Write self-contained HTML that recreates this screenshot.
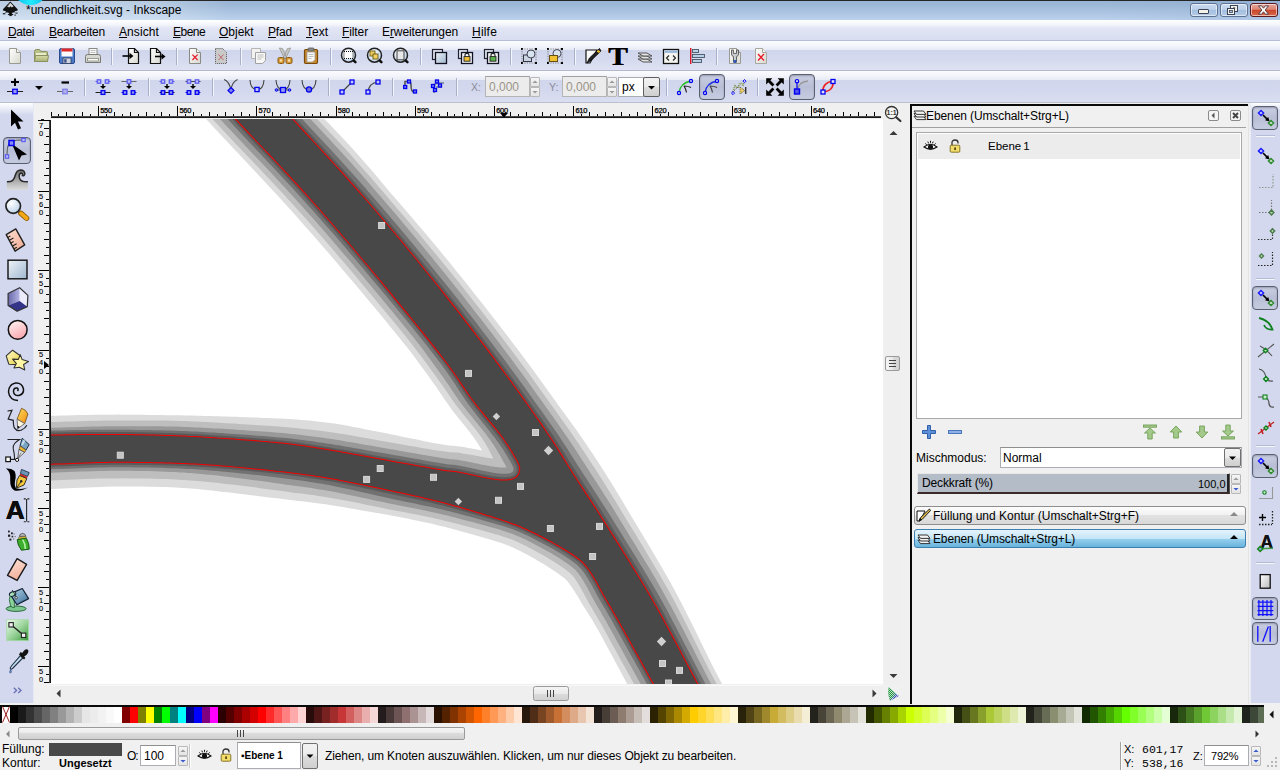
<!DOCTYPE html><html><head><meta charset="utf-8"><title>unendlichkeit.svg - Inkscape</title><style>
*{box-sizing:border-box;margin:0;padding:0}
html,body{width:1280px;height:770px;overflow:hidden;background:#f0f0f0}
body{font-family:"Liberation Sans",sans-serif;font-size:12px;color:#000;position:relative}
.a{position:absolute}
.t{position:absolute;white-space:nowrap;line-height:1}
svg{position:absolute;overflow:visible}
.sep{position:absolute;width:1px;background:#a9b0cc;box-shadow:1px 0 0 #f4f6fc}
.hsep{position:absolute;height:1px;background:#f4f6fc;box-shadow:0 -1px 0 #b4bbd4}
.pressed{position:absolute;border:1px solid #5b6070;border-radius:4px;background:linear-gradient(#c9cee2,#b9bfd6 50%,#c6cce0);box-shadow:inset 0 1px 2px rgba(60,60,90,.35)}
.spin{position:absolute;background:#fff;border:1px solid #abadb3;border-top-color:#8e8f8f}
.u{text-decoration:underline}
</style></head><body><div class="a" style="left:0;top:0;width:1280px;height:20px;background:linear-gradient(#98b4d4 0px,#9db8d7 5px,#a9c2df 11px,#b9d0eb 19px,#bcd3ee 20px)"></div><div class="a" style="left:0;top:1px;width:230px;height:19px;background:linear-gradient(90deg,rgba(255,255,255,.34) 0px,rgba(255,255,255,.30) 150px,rgba(255,255,255,0) 230px)"></div><div class="a" style="left:1100px;top:1px;width:180px;height:19px;background:linear-gradient(90deg,rgba(120,150,200,0),rgba(120,150,200,.18))"></div><div class="a" style="left:0;top:0;width:1280px;height:1px;background:#262626"></div><div class="a" style="left:13px;top:-30.5px;width:35px;height:35px;border-radius:50%;background:radial-gradient(circle at 50% 92%,#22ecff,#14c8ee 30%,#1498cc 60%)"></div><svg style="left:2px;top:1px" width="17" height="17" viewBox="0 0 17 17">
<path d="M8.3 0.6 L15.6 8.2 Q16.3 9.3 15 9.8 L12.5 10.2 L13.5 11.2 L10.8 11.6 L9.6 12.6 L11.6 13.4 L8.6 15.2 L5.6 13.6 L7.4 12.6 L6 11.6 L2.8 11.4 L4.2 10.3 L1.6 9.8 Q0.2 9.2 1.2 8.1 Z" fill="#111"/>
<path d="M8.3 1.8 L11.6 5.2 L9.8 6.4 L8.6 5.2 L7.2 6.6 L5.2 5.4 Z" fill="#d8d8d8"/>
<path d="M8.3 1.8 L5.2 5.4 L4 6.6 L6 5.6Z" fill="#888"/>
<rect x="0.8" y="12.2" width="2.6" height="1.1" fill="#111"/><rect x="13.4" y="11.6" width="2.2" height="1" fill="#111"/><rect x="12.4" y="13.6" width="1.4" height="1" fill="#111"/>
</svg><div class="t" style="left:26px;top:4px;font-size:12px;color:#000">*unendlichkeit.svg - Inkscape</div><div class="a" style="left:1190px;top:3px;width:28px;height:14px;border:1px solid #5e7391;border-radius:3px;background:linear-gradient(#c9daef 0%,#bdd1ea 45%,#a3bfe0 50%,#b4cbe6 100%);box-shadow:inset 0 0 0 1px rgba(255,255,255,.55)"></div><div class="a" style="left:1220px;top:3px;width:28px;height:14px;border:1px solid #5e7391;border-radius:3px;background:linear-gradient(#c9daef 0%,#bdd1ea 45%,#a3bfe0 50%,#b4cbe6 100%);box-shadow:inset 0 0 0 1px rgba(255,255,255,.55)"></div><div class="a" style="left:1250px;top:3px;width:28px;height:14px;border:1px solid #5a1a20;border-radius:3px;background:linear-gradient(#e7a89c 0%,#dc8573 45%,#c9452a 50%,#d9694b 100%);box-shadow:inset 0 0 0 1px rgba(255,255,255,.55)"></div><div class="a" style="left:1198px;top:9px;width:11px;height:5px;background:#f3f3ea;border:1px solid #3c4458;border-radius:1px"></div><svg style="left:1226px;top:4px" width="14" height="12" viewBox="0 0 14 12"><rect x="4.5" y="1.5" width="7" height="6" fill="#f3f3ea" stroke="#3c4458"/><rect x="1.5" y="4.5" width="7" height="6" fill="#f3f3ea" stroke="#3c4458"/><rect x="3.5" y="6.5" width="3" height="2" fill="#a9c0de" stroke="#3c4458" stroke-width=".8"/><rect x="7" y="3.4" width="2.2" height="1.2" fill="#3c4458"/></svg><svg style="left:1257px;top:5px" width="13" height="10" viewBox="0 0 13 10"><path d="M1.5 0.8 L4.6 0.8 L6.5 3.2 L8.4 0.8 L11.5 0.8 L8.2 5 L11.5 9.2 L8.4 9.2 L6.5 6.8 L4.6 9.2 L1.5 9.2 L4.8 5Z" fill="#fafafa" stroke="#4a3038" stroke-width=".9"/></svg><div class="a" style="left:0;top:20px;width:1280px;height:21px;background:linear-gradient(#ffffff 0%,#f3f5fb 22%,#e1e5f4 40%,#d8ddf0 100%)"></div><div class="a" style="left:0;top:40px;width:1280px;height:1px;background:#b6bdd8"></div><div class="t" style="left:8px;top:26px;font-size:12px;letter-spacing:-0.4px"><span class="u">D</span>atei</div><div class="t" style="left:49px;top:26px;font-size:12px;letter-spacing:-0.2px"><span class="u">B</span>earbeiten</div><div class="t" style="left:119px;top:26px;font-size:12px;letter-spacing:0.08px"><span class="u">A</span>nsicht</div><div class="t" style="left:173px;top:26px;font-size:12px;letter-spacing:-0.5px"><span class="u">E</span>bene</div><div class="t" style="left:219px;top:26px;font-size:12px;letter-spacing:0px"><span class="u">O</span>bjekt</div><div class="t" style="left:268px;top:26px;font-size:12px;letter-spacing:-0.15px"><span class="u">P</span>fad</div><div class="t" style="left:306px;top:26px;font-size:12px;letter-spacing:0px"><span class="u">T</span>ext</div><div class="t" style="left:342px;top:26px;font-size:12px;letter-spacing:-0.1px"><span class="u">F</span>ilter</div><div class="t" style="left:382px;top:26px;font-size:12px;letter-spacing:-0.1px">E<span class="u">r</span>weiterungen</div><div class="t" style="left:472px;top:26px;font-size:12px;letter-spacing:0.2px"><span class="u">H</span>ilfe</div><div class="a" style="left:0;top:41px;width:1280px;height:30px;background:linear-gradient(#fbfcfe 0px,#f5f6fb 4px,#e7eaf5 9px,#d0d6ec 9.5px,#d4d9ee 18px,#dee2f3 29px)"></div><div class="a" style="left:0;top:70px;width:1280px;height:1px;background:#b3b8cd"></div><div class="a" style="left:0;top:71px;width:1280px;height:31px;background:linear-gradient(#fbfcfe 0px,#f5f6fb 4px,#e7eaf5 9px,#d0d6ec 9.5px,#d3d8ee 20px,#dadef1 31px)"></div><div class="a" style="left:0;top:102px;width:1280px;height:1px;background:#babece"></div><div class="a" style="left:0;top:103px;width:33px;height:600px;background:linear-gradient(#ffffff 0px,#e9ecf7 6px,#d3d8ee 12px,#d3d8ee 100%)"></div><div class="a" style="left:33px;top:103px;width:1px;height:600px;background:#e6e9f5"></div><svg style="left:51px;top:119px" width="832" height="565" viewBox="51 119 832 565"><defs><clipPath id="cc"><rect x="51" y="119" width="832" height="565"/></clipPath></defs><g clip-path="url(#cc)"><rect x="51" y="119" width="832" height="565" fill="#fff"/><path d="M183.2 94.7 L185.2 96.8 L187.6 99.3 L190.3 102.2 L193.3 105.5 L196.8 109.2 L200.6 113.3 L204.8 117.7 L209.4 122.6 L214.3 128.0 L219.7 133.7 L225.7 140.1 L232.3 147.2 L239.5 154.8 L247.1 162.9 L255.0 171.3 L263.0 179.9 L271.0 188.5 L278.9 197.1 L286.6 205.5 L293.9 213.6 L300.9 221.5 L307.9 229.4 L314.9 237.3 L321.7 245.2 L328.6 253.1 L335.4 261.0 L342.1 268.9 L348.8 276.9 L355.5 284.8 L362.2 292.8 L369.0 300.9 L376.0 309.3 L383.1 317.8 L390.1 326.4 L397.1 334.9 L403.8 343.2 L410.2 351.3 L416.0 359.0 L421.2 366.2 L425.9 372.6 L429.8 378.1 L433.3 382.9 L436.3 387.1 L438.9 390.9 L441.3 394.5 L443.6 397.9 L445.9 401.3 L448.4 404.8 L451.0 408.5 L453.8 412.3 L456.8 416.0 L459.7 419.7 L462.7 423.3 L465.5 426.8 L468.2 430.2 L470.7 433.5 L473.1 436.6 L475.1 439.4 L476.9 442.0 L478.4 444.4 L479.7 446.4 L480.8 448.2 L481.7 449.7 L482.4 451.0 L483.0 452.1 L483.5 453.0 L484.0 454.0 L484.5 455.0 L485.1 456.1 L485.7 457.4 L486.4 458.7 L487.0 460.0 L487.6 461.3 L488.3 462.7 L488.9 464.0 L489.6 465.3 L490.2 466.6 L490.8 467.9 L491.4 469.0 L492.0 470.1 L492.5 471.1 L492.9 472.0 L493.3 472.7 L493.6 473.4 L493.8 473.8 L493.9 474.2 L494.0 474.4 L494.0 474.4 L493.9 474.3 L493.8 474.1 L493.7 473.7 L493.5 473.2 L493.3 472.3 L493.1 471.3 L493.0 470.1 L493.0 469.0 L493.0 467.9 L493.0 467.1 L493.1 466.6 L493.1 466.3 L493.2 465.8 L493.3 465.3 L493.4 464.8 L493.6 464.2 L493.8 463.6 L494.1 462.9 L494.5 462.1 L495.0 461.1 L495.7 460.0 L496.7 458.8 L497.7 457.6 L498.6 456.7 L499.5 456.0 L500.2 455.4 L500.9 455.0 L501.5 454.6 L502.0 454.3 L502.4 454.1 L502.8 454.0 L503.2 453.8 L503.7 453.6 L504.3 453.5 L504.8 453.3 L505.2 453.2 L505.5 453.2 L505.6 453.2 L505.6 453.2 L505.5 453.2 L505.2 453.2 L504.9 453.3 L504.5 453.3 L504.2 453.3 L503.9 453.3 L503.6 453.4 L503.2 453.4 L502.9 453.4 L502.5 453.4 L502.0 453.3 L501.5 453.3 L500.9 453.3 L500.1 453.2 L499.3 453.1 L498.4 453.0 L497.4 452.9 L496.3 452.8 L495.2 452.7 L494.1 452.5 L492.9 452.3 L491.7 452.2 L490.5 452.0 L489.4 451.8 L488.3 451.6 L487.0 451.4 L485.7 451.2 L484.3 450.9 L482.8 450.6 L481.3 450.3 L479.7 450.0 L478.1 449.7 L476.5 449.4 L475.0 449.1 L473.5 448.9 L471.9 448.6 L470.3 448.3 L468.6 448.0 L466.9 447.7 L465.2 447.3 L463.4 447.0 L461.5 446.7 L459.6 446.4 L457.5 446.2 L455.6 446.0 L453.9 445.8 L452.8 445.8 L452.3 445.8 L451.8 445.8 L450.9 445.7 L449.4 445.5 L447.2 445.2 L444.2 444.8 L440.1 444.1 L435.1 443.2 L429.5 442.2 L423.3 441.0 L416.9 439.6 L410.2 438.3 L403.5 436.9 L397.0 435.6 L390.7 434.3 L385.0 433.1 L379.5 432.1 L374.2 431.0 L369.0 429.9 L363.8 428.9 L358.7 427.8 L353.7 426.9 L348.8 425.9 L343.9 425.0 L339.1 424.3 L334.4 423.5 L329.9 422.9 L325.6 422.4 L321.4 421.9 L317.3 421.4 L313.3 421.0 L309.3 420.6 L305.3 420.3 L301.2 419.9 L297.1 419.6 L293.0 419.3 L288.8 419.0 L284.6 418.8 L280.4 418.6 L276.2 418.4 L272.1 418.2 L268.0 418.1 L263.9 417.9 L259.9 417.8 L255.9 417.6 L251.8 417.5 L247.8 417.3 L243.7 417.2 L239.6 417.0 L235.6 416.8 L231.5 416.7 L227.4 416.6 L223.4 416.4 L219.3 416.3 L215.3 416.2 L211.3 416.1 L207.4 416.0 L203.7 415.9 L200.1 415.7 L196.5 415.7 L192.8 415.6 L189.1 415.5 L185.1 415.4 L180.9 415.3 L176.5 415.3 L171.6 415.2 L166.5 415.2 L160.9 415.1 L155.1 415.0 L149.0 414.9 L142.7 414.8 L136.4 414.8 L130.0 414.7 L123.6 414.7 L117.3 414.6 L111.1 414.7 L104.9 414.7 L98.6 414.8 L92.2 414.8 L85.9 415.0 L79.5 415.1 L73.3 415.2 L67.3 415.4 L61.4 415.5 L55.9 415.7 L50.6 415.8 L45.5 415.9 L40.5 416.0 L35.5 416.1 L30.7 416.3 L26.2 416.4 L22.0 416.5 L18.1 416.6 L14.7 416.7 L11.8 416.7 L-9.5 434.6 L-14.4 467.6 L13.1 490.1 L16.0 490.0 L19.5 490.0 L23.3 489.9 L27.5 489.8 L32.0 489.6 L36.8 489.5 L41.7 489.3 L46.7 489.1 L51.8 489.0 L57.1 488.8 L62.8 488.5 L68.6 488.2 L74.6 488.0 L80.8 487.7 L87.0 487.4 L93.2 487.2 L99.3 486.9 L105.4 486.8 L111.3 486.6 L117.2 486.6 L123.3 486.5 L129.5 486.5 L135.7 486.6 L141.9 486.6 L148.0 486.7 L154.0 486.8 L159.8 487.0 L165.2 487.1 L170.3 487.3 L175.0 487.5 L179.3 487.8 L183.2 488.0 L186.9 488.3 L190.5 488.5 L194.0 488.8 L197.4 489.1 L200.9 489.4 L204.5 489.8 L208.3 490.2 L212.1 490.6 L215.9 491.0 L219.8 491.4 L223.7 491.9 L227.6 492.3 L231.6 492.8 L235.5 493.3 L239.5 493.8 L243.5 494.3 L247.4 494.8 L251.4 495.3 L255.4 495.8 L259.3 496.2 L263.3 496.7 L267.2 497.2 L271.1 497.7 L275.0 498.1 L278.9 498.6 L282.8 499.1 L286.7 499.6 L290.6 500.0 L294.5 500.5 L298.2 500.9 L302.0 501.3 L305.7 501.7 L309.5 502.2 L313.3 502.7 L317.2 503.2 L321.3 503.7 L325.5 504.3 L329.9 505.0 L334.5 505.7 L339.3 506.5 L344.3 507.3 L349.3 508.2 L354.4 509.1 L359.6 510.0 L364.8 510.9 L370.0 511.8 L375.2 512.7 L380.4 513.6 L385.8 514.6 L391.2 515.6 L396.6 516.6 L402.0 517.6 L407.3 518.6 L412.5 519.7 L417.5 520.7 L422.3 521.7 L426.8 522.7 L430.9 523.6 L434.8 524.5 L438.4 525.4 L441.9 526.2 L445.3 527.1 L448.6 527.9 L451.9 528.8 L455.4 529.7 L458.9 530.7 L462.7 531.7 L466.7 532.8 L470.8 534.0 L475.2 535.2 L479.6 536.5 L484.0 537.8 L488.3 539.0 L492.4 540.3 L496.2 541.5 L499.7 542.6 L502.8 543.6 L505.4 544.5 L507.5 545.3 L509.4 546.1 L510.9 546.7 L512.4 547.3 L513.7 548.0 L515.1 548.6 L516.6 549.4 L518.3 550.2 L520.2 551.1 L522.0 552.0 L523.8 552.9 L525.6 553.8 L527.4 554.8 L529.2 555.8 L531.0 556.8 L532.8 557.8 L534.6 558.8 L536.4 559.9 L538.2 560.9 L539.9 561.9 L541.7 563.0 L543.5 564.1 L545.2 565.1 L546.9 566.2 L548.6 567.2 L550.2 568.3 L551.7 569.3 L553.2 570.2 L554.6 571.2 L556.0 572.1 L557.3 573.0 L558.5 573.8 L559.6 574.7 L560.7 575.4 L561.7 576.2 L562.5 576.8 L563.4 577.5 L564.1 578.1 L564.7 578.6 L565.3 579.1 L565.8 579.6 L566.1 579.9 L566.4 580.2 L566.7 580.5 L566.9 580.8 L567.3 581.1 L567.7 581.6 L568.2 582.3 L568.8 583.0 L569.3 583.7 L569.8 584.4 L570.4 585.2 L571.0 586.0 L571.6 587.0 L572.4 588.1 L573.1 589.2 L573.9 590.4 L574.7 591.6 L575.4 592.8 L576.1 593.8 L576.7 594.8 L577.4 595.8 L578.0 596.9 L578.8 598.2 L579.6 599.5 L580.4 601.0 L581.4 602.7 L582.5 604.5 L583.7 606.5 L585.0 608.5 L586.2 610.3 L587.3 612.1 L588.5 614.0 L589.7 615.9 L591.0 618.1 L592.6 620.5 L594.3 623.4 L596.2 626.8 L598.5 630.8 L601.3 635.8 L604.5 641.7 L608.1 648.4 L612.0 655.6 L615.9 662.9 L619.9 670.3 L623.7 677.4 L627.3 684.0 L630.5 689.8 L633.1 694.6 L635.2 698.5 L637.0 701.8 L638.6 704.5 L639.8 706.8 L640.9 708.7 L641.8 710.3 L642.5 711.7 L643.2 712.9 L643.8 714.0 L663.9 726.9 L709.3 725.4 L727.0 692.6 L726.4 691.7 L725.9 690.8 L725.4 689.8 L724.6 688.5 L723.7 686.8 L722.5 684.6 L720.9 681.7 L718.9 678.0 L716.4 673.3 L713.4 667.5 L709.9 660.5 L706.0 652.6 L701.8 643.9 L697.2 634.6 L692.5 625.1 L687.7 615.4 L682.9 605.9 L678.1 596.7 L673.4 588.0 L668.8 579.6 L664.0 571.2 L659.1 562.8 L654.2 554.5 L649.4 546.3 L644.6 538.3 L639.9 530.6 L635.5 523.2 L631.3 516.3 L627.5 509.8 L623.9 503.7 L620.5 498.1 L617.4 492.9 L614.5 488.1 L611.7 483.6 L609.0 479.2 L606.3 475.0 L603.7 470.7 L600.9 466.5 L598.1 462.0 L595.2 457.7 L592.5 453.5 L589.7 449.4 L586.9 445.2 L584.0 441.0 L580.9 436.5 L577.7 431.8 L574.1 426.8 L570.3 421.5 L566.1 415.8 L561.7 409.7 L557.0 403.3 L552.2 396.5 L547.1 389.5 L541.9 382.2 L536.5 374.8 L531.0 367.3 L525.4 359.7 L519.7 352.0 L513.9 344.4 L508.1 336.7 L502.1 328.9 L495.9 321.0 L489.7 312.9 L483.3 304.8 L476.9 296.7 L470.4 288.5 L463.9 280.3 L457.3 272.2 L450.8 264.1 L444.2 256.1 L437.6 248.1 L430.9 240.1 L424.2 232.1 L417.4 224.1 L410.6 216.1 L403.7 208.1 L396.8 200.1 L389.8 192.0 L382.9 183.8 L375.8 175.3 L368.3 166.6 L360.6 157.7 L352.8 148.9 L344.8 140.3 L336.9 132.0 L329.3 124.1 L322.1 116.7 L315.6 109.8 L309.7 103.5 L304.4 97.8 L299.5 92.5 L295.0 87.6 L290.8 83.1 L287.1 79.0 L283.6 75.3 L280.6 72.1 L277.9 69.2 L275.6 66.7 L273.7 64.5Z" fill="#dcdcdc" fill-rule="nonzero"/><path d="M186.6 91.5 L188.6 93.6 L191.0 96.1 L193.7 99.0 L196.8 102.3 L200.2 106.0 L204.0 110.1 L208.2 114.5 L212.8 119.4 L217.8 124.7 L223.2 130.5 L229.1 136.8 L235.8 143.9 L243.1 151.5 L250.7 159.5 L258.7 167.8 L266.8 176.4 L274.9 185.0 L282.9 193.5 L290.6 201.9 L297.9 209.9 L305.0 217.8 L312.1 225.7 L319.0 233.7 L325.9 241.6 L332.8 249.5 L339.6 257.4 L346.4 265.3 L353.1 273.3 L359.8 281.2 L366.5 289.2 L373.3 297.3 L380.3 305.7 L387.4 314.2 L394.5 322.8 L401.5 331.3 L408.3 339.7 L414.6 347.7 L420.5 355.4 L425.8 362.6 L430.5 369.0 L434.6 374.6 L438.1 379.4 L441.2 383.7 L443.9 387.6 L446.3 391.1 L448.7 394.6 L451.0 398.0 L453.4 401.4 L455.9 404.9 L458.7 408.6 L461.6 412.3 L464.6 415.9 L467.5 419.5 L470.3 422.9 L473.0 426.3 L475.6 429.5 L477.9 432.5 L480.0 435.4 L481.8 438.1 L483.4 440.4 L484.7 442.5 L485.9 444.4 L486.8 445.9 L487.5 447.2 L488.2 448.3 L488.7 449.3 L489.2 450.3 L489.8 451.4 L490.4 452.6 L491.0 453.9 L491.7 455.2 L492.3 456.6 L493.0 457.9 L493.6 459.3 L494.3 460.7 L495.0 462.1 L495.6 463.5 L496.2 464.7 L496.8 465.9 L497.3 467.0 L497.8 468.1 L498.3 469.0 L498.7 469.8 L499.0 470.5 L499.2 471.0 L499.4 471.5 L499.5 471.8 L499.6 472.0 L499.6 472.1 L499.6 472.1 L499.5 472.0 L499.4 471.6 L499.3 471.1 L499.2 470.4 L499.1 469.7 L499.0 468.9 L499.0 468.2 L499.1 467.7 L499.1 467.4 L499.1 467.2 L499.1 467.0 L499.2 466.7 L499.3 466.4 L499.3 466.1 L499.5 465.8 L499.6 465.4 L499.9 464.9 L500.2 464.2 L500.7 463.5 L501.4 462.6 L502.1 461.8 L502.7 461.2 L503.2 460.7 L503.7 460.3 L504.2 460.1 L504.5 459.8 L504.8 459.7 L505.0 459.6 L505.1 459.5 L505.3 459.5 L505.6 459.3 L505.9 459.3 L506.2 459.2 L506.4 459.2 L506.4 459.1 L506.4 459.2 L506.3 459.2 L506.0 459.2 L505.7 459.2 L505.2 459.3 L504.8 459.3 L504.4 459.3 L504.0 459.4 L503.6 459.4 L503.1 459.4 L502.7 459.4 L502.2 459.4 L501.6 459.4 L501.0 459.3 L500.3 459.3 L499.5 459.2 L498.6 459.2 L497.6 459.1 L496.5 458.9 L495.4 458.8 L494.3 458.7 L493.1 458.5 L491.9 458.4 L490.6 458.2 L489.4 458.0 L488.2 457.9 L487.0 457.7 L485.7 457.4 L484.4 457.2 L482.9 457.0 L481.5 456.7 L480.0 456.4 L478.4 456.1 L476.8 455.9 L475.2 455.6 L473.7 455.3 L472.2 455.1 L470.6 454.8 L469.0 454.5 L467.4 454.2 L465.7 453.9 L463.9 453.7 L462.2 453.4 L460.4 453.1 L458.6 452.8 L456.7 452.6 L455.0 452.4 L453.5 452.3 L452.5 452.3 L451.8 452.3 L451.2 452.3 L450.1 452.2 L448.5 452.0 L446.2 451.7 L443.1 451.3 L438.9 450.7 L433.9 449.9 L428.3 449.0 L422.1 448.0 L415.6 446.8 L408.9 445.7 L402.2 444.5 L395.6 443.3 L389.3 442.2 L383.5 441.2 L378.1 440.2 L372.7 439.2 L367.4 438.3 L362.3 437.4 L357.1 436.4 L352.1 435.6 L347.2 434.7 L342.3 433.9 L337.6 433.2 L332.9 432.5 L328.5 431.9 L324.2 431.3 L320.0 430.7 L315.9 430.2 L311.9 429.8 L308.0 429.3 L304.0 428.9 L300.1 428.5 L296.1 428.1 L292.0 427.7 L287.8 427.3 L283.7 427.0 L279.6 426.6 L275.5 426.3 L271.4 426.0 L267.3 425.8 L263.3 425.5 L259.3 425.2 L255.3 425.0 L251.3 424.7 L247.2 424.4 L243.2 424.2 L239.1 423.9 L235.1 423.6 L231.0 423.4 L227.0 423.2 L222.9 422.9 L218.9 422.7 L214.9 422.5 L210.9 422.3 L207.1 422.1 L203.4 421.9 L199.8 421.7 L196.2 421.5 L192.5 421.4 L188.8 421.2 L184.9 421.1 L180.7 420.9 L176.3 420.8 L171.5 420.7 L166.3 420.6 L160.8 420.5 L154.9 420.5 L148.9 420.4 L142.6 420.4 L136.3 420.4 L129.9 420.4 L123.5 420.4 L117.2 420.4 L111.1 420.5 L104.9 420.5 L98.6 420.7 L92.3 420.8 L85.9 421.0 L79.6 421.2 L73.4 421.4 L67.4 421.5 L61.5 421.7 L56.0 421.9 L50.8 422.0 L45.7 422.2 L40.6 422.3 L35.7 422.4 L30.9 422.6 L26.4 422.7 L22.1 422.8 L18.3 422.9 L14.9 423.0 L12.0 423.0 L-3.1 435.2 L-6.0 466.9 L12.9 481.6 L15.8 481.6 L19.2 481.5 L23.0 481.4 L27.3 481.3 L31.8 481.1 L36.5 481.0 L41.4 480.8 L46.5 480.7 L51.5 480.5 L56.8 480.3 L62.4 480.1 L68.3 479.8 L74.3 479.6 L80.4 479.3 L86.7 479.1 L92.9 478.8 L99.1 478.6 L105.2 478.5 L111.2 478.4 L117.1 478.4 L123.3 478.3 L129.5 478.4 L135.8 478.4 L142.1 478.5 L148.2 478.6 L154.2 478.7 L160.0 478.9 L165.4 479.1 L170.5 479.3 L175.2 479.5 L179.5 479.7 L183.5 480.0 L187.3 480.2 L190.9 480.5 L194.4 480.7 L197.9 481.0 L201.4 481.3 L205.0 481.7 L208.8 482.0 L212.7 482.4 L216.6 482.8 L220.5 483.3 L224.4 483.7 L228.4 484.2 L232.3 484.6 L236.3 485.1 L240.3 485.6 L244.3 486.1 L248.2 486.6 L252.2 487.1 L256.2 487.6 L260.1 488.2 L264.1 488.7 L268.0 489.2 L272.0 489.7 L275.9 490.2 L279.8 490.8 L283.7 491.3 L287.6 491.8 L291.6 492.4 L295.4 492.9 L299.2 493.3 L303.0 493.8 L306.7 494.3 L310.5 494.8 L314.4 495.3 L318.3 495.9 L322.4 496.5 L326.7 497.2 L331.2 498.0 L335.8 498.8 L340.7 499.7 L345.6 500.6 L350.7 501.6 L355.8 502.6 L360.9 503.6 L366.1 504.7 L371.3 505.7 L376.5 506.8 L381.7 507.8 L387.0 508.9 L392.4 509.9 L397.8 511.0 L403.2 512.0 L408.6 513.1 L413.8 514.1 L418.8 515.1 L423.6 516.0 L428.1 516.9 L432.3 517.8 L436.3 518.7 L439.9 519.5 L443.5 520.4 L446.9 521.2 L450.2 522.0 L453.6 522.9 L457.1 523.8 L460.7 524.7 L464.5 525.7 L468.5 526.8 L472.7 527.9 L477.1 529.1 L481.5 530.3 L485.9 531.5 L490.3 532.7 L494.4 533.9 L498.4 535.1 L501.9 536.2 L505.0 537.2 L507.7 538.1 L510.0 538.9 L511.9 539.6 L513.6 540.3 L515.1 540.9 L516.6 541.6 L518.0 542.3 L519.6 543.0 L521.3 543.8 L523.1 544.7 L525.0 545.6 L526.9 546.5 L528.7 547.4 L530.6 548.4 L532.5 549.4 L534.3 550.4 L536.2 551.4 L538.0 552.4 L539.9 553.4 L541.7 554.5 L543.5 555.5 L545.3 556.5 L547.1 557.6 L548.9 558.7 L550.6 559.7 L552.3 560.8 L554.0 561.8 L555.6 562.8 L557.2 563.8 L558.6 564.7 L560.0 565.7 L561.4 566.6 L562.7 567.5 L563.9 568.3 L565.0 569.1 L566.1 569.9 L567.1 570.7 L568.0 571.4 L568.9 572.1 L569.6 572.8 L570.3 573.4 L570.9 573.9 L571.4 574.4 L571.9 574.9 L572.3 575.3 L572.7 575.8 L573.1 576.3 L573.6 577.0 L574.2 577.7 L574.8 578.5 L575.3 579.3 L575.9 580.2 L576.5 581.1 L577.2 582.1 L577.8 583.2 L578.5 584.3 L579.2 585.5 L580.0 586.7 L580.7 588.0 L581.5 589.3 L582.1 590.4 L582.7 591.5 L583.3 592.6 L583.9 593.8 L584.6 595.1 L585.3 596.5 L586.1 598.0 L587.0 599.6 L588.0 601.5 L589.1 603.4 L590.3 605.4 L591.4 607.3 L592.4 609.1 L593.5 611.0 L594.7 613.0 L596.0 615.2 L597.5 617.7 L599.1 620.6 L601.1 624.1 L603.3 628.1 L606.1 633.1 L609.3 639.0 L613.0 645.7 L616.9 652.8 L620.9 660.2 L625.0 667.5 L628.8 674.6 L632.4 681.1 L635.6 686.9 L638.2 691.7 L640.4 695.6 L642.2 698.9 L643.7 701.7 L645.0 704.0 L646.1 705.9 L646.9 707.5 L647.7 708.9 L648.3 710.1 L648.9 711.2 L664.0 721.0 L709.2 720.6 L722.8 694.9 L722.2 694.0 L721.7 693.1 L721.2 692.1 L720.5 690.9 L719.5 689.2 L718.3 686.9 L716.7 684.0 L714.7 680.3 L712.2 675.6 L709.1 669.8 L705.6 662.8 L701.6 654.9 L697.3 646.2 L692.7 637.0 L687.9 627.5 L683.1 617.9 L678.2 608.5 L673.4 599.3 L668.7 590.7 L664.0 582.4 L659.2 574.0 L654.3 565.7 L649.4 557.4 L644.6 549.3 L639.7 541.3 L635.1 533.6 L630.6 526.3 L626.4 519.4 L622.5 512.9 L618.9 506.9 L615.5 501.3 L612.4 496.2 L609.4 491.4 L606.6 486.9 L603.9 482.6 L601.2 478.3 L598.5 474.1 L595.8 469.8 L592.9 465.4 L590.0 461.0 L587.2 456.8 L584.5 452.6 L581.8 448.4 L578.9 444.1 L575.9 439.7 L572.7 435.0 L569.3 430.0 L565.5 424.7 L561.4 419.0 L557.1 412.9 L552.5 406.5 L547.6 399.7 L542.6 392.7 L537.4 385.4 L532.1 378.0 L526.6 370.5 L521.0 362.9 L515.3 355.3 L509.6 347.7 L503.7 340.0 L497.8 332.2 L491.7 324.2 L485.5 316.2 L479.1 308.1 L472.7 299.9 L466.3 291.8 L459.8 283.6 L453.2 275.5 L446.7 267.4 L440.2 259.4 L433.6 251.4 L426.9 243.4 L420.3 235.4 L413.5 227.4 L406.7 219.4 L399.8 211.4 L392.9 203.4 L386.0 195.3 L379.0 187.2 L371.9 178.8 L364.3 170.2 L356.6 161.4 L348.7 152.6 L340.8 144.0 L333.0 135.7 L325.4 127.7 L318.3 120.2 L311.8 113.2 L306.0 106.9 L300.7 101.2 L295.8 95.9 L291.3 91.0 L287.2 86.5 L283.4 82.4 L280.0 78.7 L276.9 75.5 L274.3 72.6 L271.9 70.1 L270.0 67.9Z" fill="#bebebe" fill-rule="nonzero"/><path d="M190.7 87.7 L192.7 89.9 L195.0 92.4 L197.7 95.3 L200.8 98.5 L204.2 102.2 L208.0 106.3 L212.2 110.8 L216.8 115.7 L221.8 121.0 L227.2 126.7 L233.2 133.1 L239.8 140.1 L247.1 147.7 L254.7 155.7 L262.7 164.1 L270.8 172.6 L278.9 181.2 L286.9 189.8 L294.7 198.2 L302.0 206.3 L309.2 214.2 L316.2 222.1 L323.2 230.0 L330.1 238.0 L337.0 245.9 L343.8 253.9 L350.6 261.8 L357.3 269.8 L364.1 277.7 L370.8 285.7 L377.6 293.8 L384.6 302.2 L391.7 310.8 L398.8 319.4 L405.8 327.9 L412.5 336.2 L418.9 344.3 L424.8 352.0 L430.1 359.2 L434.8 365.7 L438.9 371.4 L442.4 376.3 L445.5 380.7 L448.2 384.6 L450.7 388.3 L453.0 391.7 L455.3 395.1 L457.6 398.5 L460.1 402.0 L462.8 405.6 L465.6 409.2 L468.5 412.8 L471.4 416.3 L474.2 419.7 L476.9 423.0 L479.5 426.2 L482.0 429.2 L484.2 432.0 L486.2 434.5 L487.9 436.9 L489.4 438.9 L490.7 440.7 L491.7 442.2 L492.6 443.4 L493.4 444.5 L494.0 445.6 L494.7 446.6 L495.3 447.6 L496.0 448.7 L496.8 450.0 L497.6 451.3 L498.4 452.7 L499.2 454.0 L500.0 455.4 L500.8 456.8 L501.5 458.2 L502.2 459.5 L502.9 460.8 L503.6 462.0 L504.2 463.1 L504.8 464.1 L505.3 465.0 L505.7 465.9 L506.1 466.6 L506.5 467.3 L506.7 467.9 L507.0 468.4 L507.1 468.8 L507.3 469.1 L507.3 469.4 L507.4 469.6 L507.4 469.6 L507.4 469.5 L507.3 469.3 L507.3 469.0 L507.3 468.8 L507.3 468.5 L507.3 468.4 L507.3 468.4 L507.3 468.6 L507.3 468.6 L507.2 468.7 L507.2 468.7 L507.2 468.8 L507.2 468.8 L507.2 468.7 L507.3 468.6 L507.4 468.5 L507.5 468.2 L507.8 467.9 L508.1 467.6 L508.3 467.3 L508.5 467.2 L508.6 467.1 L508.6 467.1 L508.6 467.1 L508.6 467.1 L508.5 467.1 L508.4 467.2 L508.3 467.2 L508.2 467.2 L508.2 467.2 L508.1 467.3 L508.0 467.3 L507.8 467.3 L507.5 467.4 L507.2 467.4 L506.8 467.5 L506.3 467.5 L505.7 467.6 L505.2 467.6 L504.6 467.6 L504.1 467.6 L503.5 467.6 L503.0 467.6 L502.4 467.6 L501.7 467.6 L501.0 467.6 L500.3 467.5 L499.4 467.4 L498.5 467.3 L497.5 467.2 L496.5 467.1 L495.4 467.0 L494.2 466.8 L493.0 466.6 L491.8 466.4 L490.5 466.2 L489.2 466.0 L487.9 465.8 L486.7 465.6 L485.4 465.3 L484.1 465.0 L482.7 464.8 L481.3 464.5 L479.8 464.2 L478.3 463.8 L476.8 463.5 L475.2 463.2 L473.7 462.9 L472.2 462.6 L470.6 462.3 L469.1 462.0 L467.5 461.6 L465.9 461.3 L464.3 461.0 L462.6 460.7 L460.9 460.4 L459.2 460.1 L457.5 459.8 L455.8 459.6 L454.3 459.4 L453.1 459.3 L452.1 459.3 L451.4 459.2 L450.5 459.2 L449.3 459.0 L447.6 458.8 L445.2 458.5 L442.0 458.0 L437.8 457.3 L432.8 456.5 L427.1 455.5 L420.9 454.4 L414.4 453.3 L407.7 452.2 L401.0 451.0 L394.4 449.8 L388.1 448.7 L382.3 447.7 L376.9 446.8 L371.5 445.8 L366.2 444.9 L361.0 444.0 L355.9 443.1 L350.9 442.2 L346.0 441.4 L341.2 440.6 L336.4 439.8 L331.8 439.1 L327.4 438.4 L323.1 437.8 L319.0 437.2 L314.9 436.7 L311.0 436.2 L307.0 435.7 L303.1 435.2 L299.2 434.7 L295.3 434.3 L291.2 433.9 L287.1 433.5 L283.0 433.1 L279.0 432.8 L274.9 432.4 L270.9 432.1 L266.8 431.8 L262.8 431.5 L258.8 431.3 L254.8 431.0 L250.8 430.7 L246.7 430.4 L242.7 430.1 L238.7 429.9 L234.6 429.6 L230.6 429.3 L226.6 429.1 L222.5 428.8 L218.5 428.6 L214.5 428.4 L210.6 428.2 L206.7 428.0 L203.0 427.8 L199.4 427.6 L195.8 427.4 L192.2 427.2 L188.5 427.1 L184.6 426.9 L180.5 426.8 L176.1 426.6 L171.3 426.5 L166.1 426.4 L160.6 426.3 L154.8 426.3 L148.7 426.2 L142.5 426.2 L136.2 426.2 L129.8 426.2 L123.4 426.2 L117.2 426.2 L111.0 426.3 L104.9 426.3 L98.7 426.5 L92.3 426.6 L86.0 426.8 L79.7 427.0 L73.5 427.2 L67.5 427.3 L61.7 427.5 L56.1 427.7 L50.9 427.8 L45.8 428.0 L40.8 428.1 L35.8 428.2 L31.1 428.4 L26.5 428.5 L22.3 428.6 L18.5 428.7 L15.1 428.8 L12.1 428.9 L2.8 435.6 L1.7 466.3 L12.6 473.9 L15.5 473.8 L19.0 473.7 L22.8 473.6 L27.0 473.5 L31.5 473.3 L36.3 473.2 L41.2 473.0 L46.2 472.9 L51.3 472.7 L56.5 472.5 L62.1 472.3 L67.9 472.1 L74.0 471.8 L80.1 471.6 L86.4 471.4 L92.7 471.2 L98.9 471.0 L105.1 470.9 L111.1 470.8 L117.1 470.8 L123.3 470.8 L129.6 470.8 L135.9 470.9 L142.2 471.0 L148.3 471.1 L154.4 471.3 L160.1 471.5 L165.6 471.7 L170.8 471.9 L175.5 472.1 L179.8 472.4 L183.8 472.6 L187.6 472.9 L191.3 473.1 L194.8 473.4 L198.3 473.7 L201.9 474.0 L205.5 474.4 L209.3 474.7 L213.2 475.1 L217.2 475.6 L221.1 476.0 L225.0 476.5 L229.0 476.9 L233.0 477.4 L237.0 477.9 L241.0 478.4 L244.9 479.0 L248.9 479.5 L252.9 480.0 L256.9 480.5 L260.9 481.1 L264.8 481.6 L268.8 482.1 L272.7 482.7 L276.7 483.2 L280.6 483.8 L284.6 484.4 L288.5 484.9 L292.4 485.5 L296.3 486.0 L300.1 486.5 L303.9 487.1 L307.7 487.6 L311.5 488.1 L315.4 488.7 L319.4 489.4 L323.5 490.0 L327.8 490.8 L332.4 491.6 L337.0 492.5 L341.9 493.4 L346.8 494.4 L351.9 495.5 L357.0 496.6 L362.2 497.7 L367.4 498.8 L372.6 499.9 L377.7 501.0 L382.9 502.1 L388.2 503.2 L393.6 504.3 L399.0 505.5 L404.4 506.5 L409.8 507.6 L415.0 508.6 L420.1 509.6 L424.9 510.6 L429.4 511.5 L433.7 512.4 L437.6 513.3 L441.3 514.2 L444.9 515.0 L448.3 515.8 L451.7 516.7 L455.1 517.6 L458.6 518.5 L462.2 519.4 L466.0 520.4 L470.1 521.5 L474.3 522.6 L478.7 523.8 L483.1 525.0 L487.6 526.2 L492.0 527.4 L496.1 528.6 L500.1 529.8 L503.7 530.9 L506.9 532.0 L509.6 532.9 L511.9 533.7 L513.9 534.5 L515.7 535.2 L517.3 535.9 L518.8 536.5 L520.4 537.2 L521.9 538.0 L523.6 538.8 L525.5 539.6 L527.4 540.5 L529.3 541.5 L531.2 542.4 L533.1 543.4 L535.0 544.4 L536.9 545.4 L538.8 546.4 L540.7 547.4 L542.5 548.4 L544.4 549.4 L546.2 550.5 L548.0 551.5 L549.9 552.6 L551.7 553.6 L553.5 554.7 L555.3 555.8 L557.0 556.8 L558.6 557.8 L560.2 558.8 L561.7 559.8 L563.2 560.7 L564.6 561.7 L565.9 562.6 L567.2 563.4 L568.4 564.3 L569.5 565.1 L570.6 565.9 L571.6 566.7 L572.6 567.5 L573.4 568.2 L574.3 568.9 L575.0 569.6 L575.6 570.2 L576.1 570.8 L576.6 571.3 L577.1 571.9 L577.7 572.6 L578.2 573.3 L578.9 574.1 L579.5 575.0 L580.2 575.9 L580.8 576.8 L581.5 577.8 L582.1 578.9 L582.8 580.1 L583.6 581.2 L584.3 582.5 L585.0 583.8 L585.8 585.1 L586.5 586.3 L587.2 587.6 L587.8 588.7 L588.4 589.9 L589.1 591.1 L589.7 592.4 L590.4 593.8 L591.2 595.3 L592.1 596.9 L593.1 598.7 L594.1 600.6 L595.2 602.6 L596.3 604.4 L597.3 606.2 L598.4 608.1 L599.6 610.1 L600.9 612.3 L602.3 614.9 L604.0 617.8 L606.0 621.3 L608.3 625.4 L611.0 630.3 L614.3 636.3 L618.0 642.9 L621.9 650.0 L625.9 657.4 L630.0 664.7 L633.9 671.8 L637.5 678.3 L640.7 684.1 L643.3 688.9 L645.5 692.8 L647.3 696.1 L648.8 698.9 L650.1 701.2 L651.1 703.1 L652.0 704.7 L652.8 706.1 L653.4 707.3 L654.0 708.4 L664.1 715.2 L709.1 715.8 L718.6 697.3 L718.1 696.4 L717.6 695.5 L717.0 694.5 L716.3 693.2 L715.3 691.5 L714.1 689.2 L712.5 686.3 L710.4 682.5 L707.9 677.9 L704.9 672.1 L701.3 665.1 L697.3 657.2 L692.9 648.6 L688.2 639.4 L683.4 630.0 L678.4 620.4 L673.5 611.0 L668.6 602.0 L663.9 593.4 L659.3 585.2 L654.5 576.9 L649.6 568.6 L644.6 560.4 L639.7 552.3 L634.9 544.3 L630.2 536.7 L625.8 529.4 L621.5 522.5 L617.6 516.0 L613.9 510.0 L610.6 504.5 L607.4 499.4 L604.4 494.7 L601.6 490.2 L598.8 485.9 L596.1 481.7 L593.4 477.5 L590.6 473.2 L587.8 468.7 L584.9 464.2 L582.1 460.0 L579.4 455.8 L576.7 451.5 L573.9 447.2 L570.9 442.8 L567.8 438.1 L564.4 433.2 L560.8 427.9 L556.8 422.2 L552.4 416.1 L547.9 409.7 L543.1 402.9 L538.1 395.9 L532.9 388.7 L527.6 381.3 L522.1 373.7 L516.5 366.2 L510.9 358.5 L505.2 350.9 L499.4 343.3 L493.5 335.4 L487.4 327.5 L481.2 319.5 L474.9 311.4 L468.5 303.2 L462.1 295.0 L455.6 286.9 L449.1 278.8 L442.6 270.7 L436.1 262.7 L429.6 254.7 L422.9 246.7 L416.3 238.7 L409.6 230.7 L402.8 222.7 L396.0 214.6 L389.1 206.6 L382.2 198.6 L375.2 190.5 L368.1 182.2 L360.5 173.6 L352.8 164.8 L344.9 156.1 L337.0 147.5 L329.2 139.1 L321.7 131.1 L314.7 123.5 L308.2 116.6 L302.3 110.3 L297.1 104.5 L292.2 99.2 L287.7 94.3 L283.6 89.8 L279.8 85.7 L276.4 82.1 L273.3 78.8 L270.7 75.9 L268.3 73.4 L266.4 71.3Z" fill="#999999" fill-rule="nonzero"/><path d="M194.7 84.0 L196.7 86.1 L199.0 88.6 L201.7 91.5 L204.8 94.8 L208.2 98.5 L212.1 102.5 L216.3 107.0 L220.8 111.9 L225.8 117.2 L231.2 123.0 L237.1 129.3 L243.8 136.4 L251.0 144.0 L258.6 152.0 L266.5 160.4 L274.6 169.0 L282.7 177.7 L290.7 186.3 L298.5 194.7 L305.9 202.9 L313.0 210.8 L320.0 218.7 L327.1 226.7 L334.0 234.6 L340.9 242.6 L347.7 250.5 L354.5 258.5 L361.3 266.4 L368.0 274.4 L374.7 282.4 L381.5 290.5 L388.6 298.9 L395.7 307.5 L402.8 316.1 L409.8 324.6 L416.6 333.0 L423.1 341.0 L429.1 348.6 L434.6 355.7 L439.5 362.1 L443.7 367.7 L447.3 372.7 L450.4 377.2 L453.1 381.3 L455.6 385.0 L457.8 388.6 L460.0 392.0 L462.2 395.3 L464.5 398.8 L467.1 402.4 L469.7 406.0 L472.5 409.7 L475.2 413.2 L477.9 416.7 L480.6 420.0 L483.1 423.2 L485.6 426.2 L487.8 429.0 L489.9 431.6 L491.7 433.9 L493.3 435.9 L494.6 437.6 L495.7 439.1 L496.7 440.4 L497.5 441.5 L498.3 442.6 L499.0 443.6 L499.7 444.6 L500.5 445.7 L501.3 447.0 L502.2 448.3 L503.1 449.6 L504.0 451.0 L504.9 452.4 L505.7 453.8 L506.6 455.2 L507.4 456.5 L508.1 457.7 L508.8 458.9 L509.5 460.1 L510.1 461.1 L510.6 462.0 L511.1 462.9 L511.6 463.7 L512.0 464.5 L512.3 465.2 L512.6 465.8 L512.8 466.3 L513.1 466.8 L513.2 467.3 L513.4 467.7 L513.5 468.1 L513.5 468.3 L513.5 468.4 L513.6 468.6 L513.6 468.7 L513.6 468.8 L513.5 469.0 L513.5 469.2 L513.5 469.5 L513.4 469.8 L513.4 470.1 L513.3 470.4 L513.2 470.8 L513.1 471.0 L513.0 471.3 L512.9 471.5 L512.8 471.7 L512.7 471.8 L512.7 471.8 L512.6 471.9 L512.5 472.0 L512.4 472.1 L512.2 472.2 L512.0 472.3 L511.8 472.5 L511.5 472.6 L511.2 472.8 L510.8 472.9 L510.5 473.1 L510.2 473.2 L509.9 473.3 L509.6 473.3 L509.2 473.4 L508.8 473.5 L508.4 473.6 L507.9 473.6 L507.3 473.7 L506.8 473.7 L506.1 473.7 L505.5 473.8 L504.8 473.8 L504.2 473.8 L503.5 473.8 L502.9 473.8 L502.2 473.8 L501.4 473.7 L500.6 473.7 L499.7 473.6 L498.8 473.5 L497.8 473.4 L496.8 473.3 L495.7 473.1 L494.5 472.9 L493.3 472.7 L492.0 472.5 L490.8 472.3 L489.5 472.1 L488.2 471.8 L486.9 471.6 L485.6 471.3 L484.2 471.0 L482.9 470.7 L481.5 470.4 L480.0 470.1 L478.6 469.8 L477.1 469.4 L475.6 469.1 L474.0 468.7 L472.5 468.4 L471.0 468.1 L469.5 467.8 L467.9 467.4 L466.4 467.1 L464.8 466.7 L463.2 466.4 L461.5 466.1 L459.9 465.8 L458.3 465.5 L456.6 465.2 L455.1 464.9 L453.8 464.8 L452.7 464.7 L451.8 464.7 L451.0 464.6 L450.0 464.5 L448.7 464.4 L446.8 464.2 L444.3 463.8 L441.1 463.3 L436.9 462.5 L431.9 461.7 L426.2 460.7 L420.0 459.6 L413.5 458.4 L406.8 457.3 L400.0 456.1 L393.5 454.9 L387.2 453.8 L381.4 452.8 L376.0 451.9 L370.6 450.9 L365.3 450.0 L360.1 449.1 L355.0 448.2 L350.0 447.3 L345.1 446.5 L340.3 445.6 L335.6 444.9 L331.0 444.1 L326.5 443.5 L322.3 442.8 L318.2 442.2 L314.1 441.6 L310.2 441.1 L306.3 440.5 L302.5 440.0 L298.6 439.5 L294.7 439.0 L290.7 438.6 L286.6 438.1 L282.6 437.7 L278.5 437.4 L274.5 437.0 L270.5 436.7 L266.4 436.3 L262.4 436.0 L258.4 435.7 L254.4 435.4 L250.4 435.1 L246.4 434.8 L242.4 434.5 L238.4 434.2 L234.3 433.9 L230.3 433.7 L226.3 433.4 L222.3 433.1 L218.3 432.9 L214.3 432.6 L210.3 432.4 L206.5 432.2 L202.8 432.0 L199.2 431.8 L195.6 431.6 L192.0 431.4 L188.3 431.2 L184.4 431.1 L180.3 430.9 L175.9 430.7 L171.2 430.6 L166.0 430.5 L160.5 430.3 L154.7 430.2 L148.6 430.1 L142.4 430.0 L136.1 429.9 L129.7 429.8 L123.4 429.7 L117.1 429.7 L111.0 429.7 L104.9 429.7 L98.7 429.7 L92.4 429.8 L86.0 429.9 L79.7 430.0 L73.6 430.1 L67.5 430.2 L61.7 430.4 L56.1 430.5 L50.9 430.6 L45.9 430.7 L40.8 430.8 L35.9 430.9 L31.1 431.1 L26.6 431.2 L22.4 431.3 L18.5 431.4 L15.1 431.5 L12.2 431.6 L5.5 435.8 L5.0 466.0 L12.5 470.5 L15.4 470.4 L18.8 470.3 L22.7 470.2 L26.9 470.1 L31.4 469.9 L36.2 469.8 L41.1 469.6 L46.1 469.5 L51.2 469.3 L56.4 469.1 L62.0 468.9 L67.8 468.7 L73.8 468.4 L80.0 468.2 L86.3 467.9 L92.6 467.7 L98.8 467.5 L105.0 467.4 L111.1 467.3 L117.1 467.3 L123.3 467.3 L129.6 467.3 L135.9 467.4 L142.2 467.5 L148.4 467.6 L154.4 467.7 L160.2 467.8 L165.7 468.0 L170.9 468.2 L175.6 468.3 L179.9 468.5 L184.0 468.7 L187.8 468.9 L191.5 469.1 L195.0 469.3 L198.6 469.6 L202.1 469.8 L205.8 470.1 L209.6 470.4 L213.6 470.7 L217.5 471.0 L221.5 471.4 L225.4 471.8 L229.4 472.2 L233.4 472.6 L237.4 473.0 L241.4 473.4 L245.4 473.8 L249.4 474.3 L253.4 474.7 L257.4 475.1 L261.4 475.6 L265.4 476.0 L269.4 476.5 L273.3 476.9 L277.3 477.4 L281.3 477.9 L285.3 478.4 L289.2 479.0 L293.2 479.5 L297.0 480.0 L300.9 480.6 L304.7 481.1 L308.5 481.7 L312.3 482.3 L316.3 482.9 L320.3 483.6 L324.5 484.3 L328.8 485.1 L333.4 486.0 L338.1 487.0 L343.0 488.0 L347.9 489.0 L353.0 490.1 L358.1 491.3 L363.3 492.4 L368.5 493.6 L373.6 494.7 L378.8 495.9 L383.9 497.1 L389.2 498.2 L394.6 499.4 L400.1 500.6 L405.5 501.7 L410.8 502.8 L416.1 503.8 L421.1 504.9 L426.0 505.9 L430.6 506.8 L434.8 507.8 L438.8 508.7 L442.5 509.6 L446.1 510.4 L449.6 511.3 L453.0 512.2 L456.4 513.1 L459.9 514.0 L463.5 515.0 L467.3 516.0 L471.4 517.1 L475.6 518.2 L480.0 519.5 L484.5 520.7 L488.9 522.0 L493.3 523.2 L497.5 524.5 L501.5 525.6 L505.1 526.8 L508.3 527.8 L511.1 528.8 L513.5 529.6 L515.5 530.4 L517.4 531.1 L519.1 531.8 L520.6 532.5 L522.2 533.2 L523.8 534.0 L525.5 534.8 L527.3 535.6 L529.3 536.5 L531.2 537.5 L533.1 538.4 L535.1 539.4 L537.0 540.4 L538.9 541.4 L540.9 542.4 L542.8 543.4 L544.7 544.4 L546.5 545.4 L548.4 546.4 L550.2 547.5 L552.1 548.5 L554.0 549.6 L555.8 550.7 L557.6 551.7 L559.4 552.8 L561.1 553.8 L562.7 554.8 L564.2 555.8 L565.7 556.7 L567.2 557.7 L568.5 558.6 L569.9 559.5 L571.1 560.4 L572.3 561.2 L573.5 562.1 L574.6 562.9 L575.6 563.7 L576.6 564.5 L577.4 565.3 L578.2 566.0 L579.0 566.7 L579.6 567.4 L580.2 568.0 L580.8 568.7 L581.5 569.4 L582.1 570.2 L582.7 571.1 L583.5 572.0 L584.2 573.0 L584.9 574.0 L585.6 575.1 L586.3 576.2 L587.1 577.4 L587.8 578.6 L588.6 579.9 L589.4 581.2 L590.1 582.5 L590.9 583.8 L591.6 585.0 L592.3 586.2 L592.9 587.4 L593.6 588.7 L594.3 590.0 L595.0 591.3 L595.8 592.8 L596.7 594.4 L597.6 596.1 L598.7 598.0 L599.8 599.9 L600.8 601.7 L601.9 603.5 L603.0 605.4 L604.2 607.4 L605.5 609.6 L607.0 612.2 L608.7 615.2 L610.7 618.6 L613.0 622.7 L615.7 627.7 L619.0 633.6 L622.7 640.3 L626.7 647.4 L630.7 654.7 L634.8 662.1 L638.7 669.1 L642.3 675.7 L645.5 681.5 L648.1 686.3 L650.3 690.1 L652.1 693.4 L653.6 696.2 L654.9 698.5 L656.0 700.5 L656.8 702.1 L657.6 703.4 L658.2 704.6 L658.8 705.7 L664.3 709.7 L708.9 710.8 L714.2 699.7 L713.7 698.9 L713.2 698.0 L712.6 697.0 L711.9 695.6 L710.9 693.9 L709.7 691.6 L708.1 688.7 L706.0 684.9 L703.5 680.3 L700.4 674.4 L696.8 667.5 L692.7 659.6 L688.3 651.0 L683.6 641.9 L678.7 632.5 L673.7 623.0 L668.8 613.6 L663.9 604.6 L659.2 596.2 L654.5 588.0 L649.6 579.8 L644.7 571.6 L639.7 563.4 L634.8 555.3 L629.9 547.5 L625.2 539.9 L620.7 532.6 L616.4 525.7 L612.4 519.3 L608.7 513.3 L605.3 507.9 L602.1 502.9 L599.1 498.2 L596.2 493.7 L593.4 489.5 L590.7 485.3 L588.0 481.0 L585.1 476.7 L582.2 472.2 L579.3 467.7 L576.6 463.4 L573.9 459.2 L571.2 454.9 L568.4 450.6 L565.6 446.1 L562.5 441.5 L559.3 436.6 L555.7 431.3 L551.7 425.6 L547.5 419.5 L543.0 413.1 L538.2 406.4 L533.2 399.4 L528.1 392.2 L522.7 384.8 L517.3 377.3 L511.7 369.7 L506.1 362.1 L500.4 354.5 L494.6 346.9 L488.7 339.1 L482.6 331.2 L476.5 323.1 L470.2 315.0 L463.8 306.9 L457.4 298.8 L450.9 290.6 L444.4 282.5 L437.9 274.5 L431.4 266.5 L424.9 258.5 L418.3 250.5 L411.7 242.4 L405.0 234.4 L398.3 226.4 L391.5 218.4 L384.7 210.4 L377.8 202.4 L370.8 194.4 L363.6 186.1 L356.0 177.6 L348.3 168.9 L340.4 160.2 L332.5 151.6 L324.7 143.3 L317.2 135.3 L310.2 127.7 L303.7 120.7 L297.8 114.4 L292.6 108.7 L287.7 103.4 L283.2 98.5 L279.1 94.0 L275.3 89.9 L271.9 86.2 L268.9 82.9 L266.2 80.0 L263.9 77.5 L261.9 75.4Z" fill="#717171" fill-rule="nonzero"/><path d="M197.1 81.6 L199.1 83.8 L201.5 86.3 L204.2 89.2 L207.3 92.5 L210.7 96.1 L214.5 100.2 L218.7 104.7 L223.3 109.6 L228.3 114.9 L233.6 120.6 L239.6 127.0 L246.2 134.0 L253.4 141.7 L261.0 149.7 L269.0 158.1 L277.0 166.8 L285.1 175.4 L293.1 184.1 L300.9 192.5 L308.2 200.7 L315.4 208.7 L322.4 216.7 L329.4 224.6 L336.4 232.6 L343.3 240.5 L350.1 248.5 L356.9 256.5 L363.7 264.4 L370.4 272.4 L377.1 280.4 L383.9 288.5 L390.9 297.0 L398.0 305.5 L405.2 314.2 L412.2 322.7 L419.0 331.1 L425.4 339.1 L431.5 346.7 L437.0 353.8 L441.9 360.2 L446.2 365.9 L449.8 370.9 L452.9 375.5 L455.7 379.6 L458.2 383.3 L460.4 386.8 L462.6 390.2 L464.8 393.6 L467.1 396.9 L469.6 400.5 L472.3 404.1 L475.0 407.6 L477.8 411.2 L480.5 414.6 L483.1 417.9 L485.7 421.1 L488.2 424.0 L490.4 426.8 L492.5 429.4 L494.4 431.8 L496.0 433.8 L497.3 435.5 L498.5 437.0 L499.5 438.3 L500.3 439.5 L501.1 440.6 L501.8 441.6 L502.6 442.7 L503.3 443.8 L504.2 445.0 L505.1 446.4 L506.0 447.8 L506.9 449.2 L507.8 450.6 L508.7 452.0 L509.5 453.4 L510.3 454.7 L511.1 456.0 L511.8 457.2 L512.5 458.3 L513.1 459.4 L513.6 460.4 L514.1 461.3 L514.6 462.1 L515.0 462.9 L515.4 463.6 L515.7 464.3 L516.0 465.0 L516.3 465.6 L516.5 466.2 L516.7 466.7 L516.8 467.2 L516.9 467.6 L516.9 468.0 L517.0 468.3 L517.0 468.6 L517.0 468.9 L517.0 469.3 L516.9 469.7 L516.9 470.1 L516.8 470.5 L516.7 470.9 L516.6 471.4 L516.4 471.8 L516.3 472.3 L516.1 472.7 L515.9 473.1 L515.7 473.4 L515.5 473.7 L515.3 474.0 L515.1 474.3 L514.8 474.5 L514.5 474.8 L514.2 475.0 L513.9 475.2 L513.5 475.5 L513.1 475.7 L512.6 475.9 L512.2 476.1 L511.7 476.3 L511.3 476.4 L510.9 476.6 L510.4 476.7 L509.9 476.8 L509.4 476.9 L508.8 477.0 L508.3 477.0 L507.7 477.1 L507.0 477.1 L506.3 477.2 L505.6 477.2 L505.0 477.3 L504.3 477.3 L503.5 477.3 L502.8 477.3 L502.0 477.2 L501.2 477.2 L500.4 477.1 L499.4 477.1 L498.5 477.0 L497.4 476.8 L496.3 476.7 L495.2 476.5 L494.0 476.4 L492.8 476.2 L491.5 476.0 L490.2 475.8 L488.9 475.5 L487.5 475.3 L486.2 475.0 L484.9 474.8 L483.5 474.5 L482.1 474.2 L480.7 473.9 L479.3 473.5 L477.8 473.2 L476.3 472.9 L474.8 472.5 L473.3 472.2 L471.8 471.9 L470.3 471.6 L468.8 471.2 L467.2 470.9 L465.6 470.6 L464.1 470.2 L462.5 469.9 L460.9 469.6 L459.3 469.3 L457.7 469.0 L456.1 468.7 L454.6 468.5 L453.5 468.4 L452.5 468.3 L451.6 468.2 L450.8 468.2 L449.7 468.1 L448.3 468.0 L446.3 467.7 L443.8 467.3 L440.5 466.8 L436.3 466.1 L431.2 465.2 L425.6 464.2 L419.4 463.1 L412.8 462.0 L406.1 460.8 L399.4 459.6 L392.8 458.5 L386.6 457.4 L380.8 456.4 L375.3 455.4 L369.9 454.5 L364.7 453.5 L359.5 452.6 L354.4 451.7 L349.4 450.8 L344.5 450.0 L339.7 449.2 L335.0 448.4 L330.4 447.6 L326.0 446.9 L321.7 446.2 L317.6 445.5 L313.6 444.9 L309.7 444.2 L305.9 443.7 L302.0 443.1 L298.2 442.6 L294.3 442.0 L290.3 441.5 L286.3 441.1 L282.3 440.6 L278.2 440.2 L274.2 439.8 L270.2 439.5 L266.2 439.1 L262.2 438.8 L258.2 438.5 L254.2 438.1 L250.2 437.8 L246.2 437.5 L242.2 437.2 L238.2 436.9 L234.1 436.6 L230.1 436.3 L226.1 436.0 L222.1 435.8 L218.1 435.5 L214.1 435.2 L210.1 435.0 L206.3 434.8 L202.6 434.6 L199.0 434.3 L195.5 434.1 L191.9 434.0 L188.2 433.8 L184.3 433.6 L180.2 433.4 L175.8 433.3 L171.1 433.1 L165.9 432.9 L160.4 432.8 L154.6 432.6 L148.6 432.5 L142.4 432.3 L136.1 432.2 L129.7 432.1 L123.4 432.0 L117.1 431.9 L111.0 431.9 L104.9 431.9 L98.7 431.9 L92.4 432.0 L86.1 432.0 L79.8 432.1 L73.6 432.2 L67.6 432.3 L61.7 432.4 L56.2 432.5 L51.0 432.6 L45.9 432.7 L40.9 432.8 L35.9 432.9 L31.2 433.1 L26.7 433.2 L22.5 433.3 L18.6 433.4 L15.2 433.5 L12.3 433.6 L7.5 436.0 L7.5 465.8 L12.4 468.0 L15.4 467.9 L18.8 467.8 L22.6 467.7 L26.8 467.6 L31.3 467.4 L36.1 467.3 L41.0 467.1 L46.0 467.0 L51.1 466.8 L56.3 466.6 L61.9 466.4 L67.7 466.2 L73.7 465.9 L79.9 465.7 L86.2 465.4 L92.5 465.2 L98.8 465.0 L105.0 464.9 L111.0 464.8 L117.1 464.8 L123.3 464.8 L129.6 464.8 L136.0 464.9 L142.3 465.0 L148.5 465.1 L154.5 465.2 L160.3 465.3 L165.8 465.5 L170.9 465.6 L175.7 465.7 L180.0 465.9 L184.1 466.0 L188.0 466.2 L191.6 466.4 L195.2 466.6 L198.7 466.8 L202.3 467.0 L206.0 467.2 L209.8 467.5 L213.8 467.8 L217.7 468.1 L221.7 468.4 L225.7 468.7 L229.7 469.1 L233.7 469.5 L237.7 469.8 L241.7 470.2 L245.8 470.6 L249.8 471.0 L253.8 471.4 L257.8 471.8 L261.7 472.2 L265.7 472.6 L269.7 473.0 L273.7 473.4 L277.7 473.9 L281.7 474.3 L285.7 474.8 L289.7 475.3 L293.6 475.8 L297.5 476.3 L301.3 476.8 L305.2 477.3 L309.0 477.9 L312.9 478.4 L316.8 479.0 L320.9 479.7 L325.1 480.4 L329.5 481.2 L334.1 482.0 L338.9 482.9 L343.7 483.9 L348.7 484.9 L353.8 486.0 L359.0 487.1 L364.2 488.2 L369.4 489.3 L374.5 490.4 L379.7 491.6 L384.9 492.7 L390.2 493.8 L395.6 495.0 L401.0 496.2 L406.4 497.3 L411.8 498.5 L417.0 499.6 L422.1 500.7 L426.9 501.8 L431.5 502.8 L435.8 503.9 L439.8 504.8 L443.5 505.8 L447.1 506.7 L450.6 507.6 L454.0 508.5 L457.5 509.5 L461.0 510.4 L464.6 511.5 L468.4 512.5 L472.4 513.7 L476.6 514.9 L481.0 516.2 L485.5 517.6 L489.9 518.9 L494.3 520.2 L498.5 521.5 L502.4 522.8 L506.0 524.0 L509.3 525.1 L512.0 526.0 L514.5 526.9 L516.6 527.7 L518.5 528.5 L520.2 529.2 L521.8 529.9 L523.4 530.6 L525.0 531.4 L526.7 532.2 L528.6 533.0 L530.5 533.9 L532.5 534.9 L534.4 535.8 L536.4 536.8 L538.3 537.8 L540.3 538.8 L542.2 539.8 L544.1 540.8 L546.0 541.8 L547.9 542.8 L549.8 543.8 L551.7 544.9 L553.6 545.9 L555.5 547.0 L557.3 548.0 L559.1 549.1 L560.9 550.2 L562.6 551.2 L564.3 552.2 L565.9 553.2 L567.4 554.1 L568.8 555.1 L570.2 556.0 L571.6 556.9 L572.9 557.8 L574.1 558.7 L575.3 559.6 L576.5 560.4 L577.6 561.3 L578.6 562.1 L579.5 562.9 L580.4 563.7 L581.2 564.4 L581.9 565.2 L582.6 565.9 L583.2 566.6 L583.9 567.4 L584.6 568.3 L585.3 569.1 L586.0 570.1 L586.8 571.1 L587.5 572.2 L588.3 573.3 L589.0 574.5 L589.8 575.7 L590.6 577.0 L591.4 578.2 L592.1 579.5 L592.9 580.9 L593.7 582.2 L594.4 583.4 L595.1 584.7 L595.8 585.9 L596.5 587.2 L597.2 588.4 L597.9 589.8 L598.7 591.3 L599.5 592.8 L600.5 594.5 L601.5 596.4 L602.6 598.3 L603.7 600.1 L604.7 601.9 L605.8 603.7 L607.0 605.7 L608.3 608.0 L609.8 610.5 L611.6 613.5 L613.6 617.0 L615.9 621.1 L618.6 626.1 L622.0 632.0 L625.6 638.6 L629.6 645.8 L633.7 653.1 L637.7 660.4 L641.6 667.5 L645.2 674.0 L648.4 679.8 L651.1 684.6 L653.2 688.5 L655.1 691.8 L656.6 694.6 L657.9 696.9 L658.9 698.8 L659.8 700.4 L660.6 701.8 L661.2 703.0 L661.8 704.1 L664.3 706.3 L708.9 706.9 L710.8 701.6 L710.3 700.8 L709.8 699.9 L709.2 698.9 L708.5 697.6 L707.5 695.8 L706.3 693.5 L704.6 690.6 L702.6 686.8 L700.1 682.1 L697.0 676.3 L693.3 669.3 L689.2 661.5 L684.7 652.9 L680.0 643.8 L675.0 634.4 L670.0 625.0 L665.0 615.7 L660.1 606.8 L655.3 598.4 L650.7 590.3 L645.8 582.1 L640.9 573.9 L635.9 565.8 L630.9 557.7 L626.1 549.9 L621.3 542.3 L616.7 535.1 L612.4 528.2 L608.4 521.8 L604.7 515.9 L601.3 510.5 L598.1 505.5 L595.0 500.8 L592.2 496.4 L589.4 492.2 L586.6 488.0 L583.8 483.7 L581.0 479.4 L578.1 474.9 L575.2 470.3 L572.4 466.0 L569.7 461.7 L567.1 457.4 L564.4 453.1 L561.6 448.7 L558.6 444.0 L555.4 439.1 L551.9 433.8 L548.0 428.2 L543.8 422.1 L539.3 415.7 L534.5 408.9 L529.6 401.9 L524.4 394.7 L519.1 387.4 L513.7 379.9 L508.1 372.3 L502.5 364.7 L496.9 357.2 L491.1 349.5 L485.2 341.7 L479.2 333.8 L473.0 325.8 L466.7 317.7 L460.4 309.6 L454.0 301.4 L447.5 293.3 L441.1 285.2 L434.6 277.2 L428.1 269.2 L421.6 261.2 L415.0 253.2 L408.4 245.2 L401.8 237.2 L395.0 229.2 L388.3 221.2 L381.5 213.2 L374.6 205.2 L367.6 197.1 L360.4 188.9 L352.9 180.4 L345.1 171.8 L337.2 163.1 L329.3 154.5 L321.6 146.1 L314.1 138.1 L307.1 130.5 L300.6 123.5 L294.8 117.2 L289.6 111.4 L284.7 106.1 L280.2 101.2 L276.1 96.7 L272.3 92.7 L268.9 89.0 L265.9 85.7 L263.2 82.8 L260.9 80.3 L258.9 78.2Z" fill="#5a5a5a" fill-rule="nonzero"/><path d="M198.9 80.0 L200.9 82.1 L203.3 84.6 L206.0 87.5 L209.0 90.8 L212.5 94.5 L216.3 98.6 L220.5 103.1 L225.1 108.0 L230.0 113.3 L235.4 119.0 L241.4 125.3 L248.0 132.4 L255.2 140.0 L262.8 148.0 L270.8 156.4 L278.9 165.0 L287.0 173.7 L295.0 182.3 L302.8 190.8 L310.1 199.0 L317.3 207.0 L324.3 215.0 L331.3 223.0 L338.2 231.0 L345.1 239.0 L351.9 247.0 L358.6 255.0 L365.4 263.0 L372.1 271.0 L378.8 279.0 L385.5 287.2 L392.5 295.6 L399.6 304.3 L406.7 312.9 L413.7 321.5 L420.4 329.9 L426.9 337.9 L433.0 345.6 L438.5 352.6 L443.5 359.0 L447.8 364.7 L451.5 369.7 L454.7 374.2 L457.5 378.3 L460.0 382.1 L462.3 385.6 L464.6 388.9 L466.8 392.2 L469.1 395.5 L471.6 399.0 L474.3 402.5 L477.0 406.1 L479.8 409.5 L482.5 412.9 L485.2 416.2 L487.8 419.3 L490.3 422.3 L492.6 425.1 L494.7 427.6 L496.6 430.0 L498.2 432.1 L499.6 433.8 L500.7 435.3 L501.7 436.7 L502.6 437.8 L503.4 438.9 L504.1 440.0 L504.9 441.1 L505.6 442.2 L506.5 443.5 L507.4 444.9 L508.3 446.3 L509.2 447.7 L510.1 449.1 L511.0 450.6 L511.9 452.0 L512.7 453.3 L513.4 454.6 L514.1 455.9 L514.8 457.0 L515.4 458.1 L516.0 459.0 L516.5 460.0 L517.0 460.8 L517.4 461.7 L517.8 462.5 L518.1 463.2 L518.5 463.9 L518.7 464.6 L519.0 465.3 L519.2 465.9 L519.4 466.5 L519.5 467.1 L519.6 467.6 L519.6 468.1 L519.7 468.6 L519.7 469.0 L519.6 469.5 L519.6 470.0 L519.5 470.5 L519.4 471.0 L519.3 471.6 L519.1 472.1 L519.0 472.7 L518.8 473.2 L518.6 473.8 L518.3 474.3 L518.0 474.8 L517.7 475.3 L517.4 475.7 L517.0 476.1 L516.7 476.5 L516.2 476.8 L515.8 477.2 L515.3 477.5 L514.8 477.8 L514.3 478.1 L513.8 478.3 L513.2 478.6 L512.7 478.8 L512.2 479.0 L511.6 479.2 L511.0 479.3 L510.4 479.4 L509.8 479.6 L509.2 479.6 L508.6 479.7 L507.9 479.8 L507.2 479.9 L506.5 479.9 L505.8 479.9 L505.0 480.0 L504.3 480.0 L503.5 480.0 L502.7 480.0 L501.9 480.0 L501.1 479.9 L500.2 479.9 L499.2 479.8 L498.2 479.7 L497.1 479.6 L496.0 479.4 L494.8 479.3 L493.6 479.1 L492.3 478.9 L491.0 478.7 L489.7 478.5 L488.4 478.3 L487.0 478.0 L485.7 477.8 L484.3 477.5 L482.9 477.3 L481.5 477.0 L480.1 476.6 L478.6 476.3 L477.2 476.0 L475.7 475.7 L474.2 475.3 L472.7 475.0 L471.2 474.7 L469.7 474.4 L468.2 474.1 L466.6 473.7 L465.0 473.4 L463.5 473.1 L461.9 472.8 L460.3 472.4 L458.7 472.1 L457.2 471.9 L455.6 471.6 L454.2 471.4 L453.2 471.3 L452.3 471.2 L451.5 471.2 L450.6 471.1 L449.4 471.0 L447.9 470.9 L445.9 470.6 L443.3 470.2 L440.0 469.7 L435.8 469.0 L430.7 468.1 L425.0 467.1 L418.8 466.0 L412.3 464.8 L405.6 463.6 L398.9 462.4 L392.3 461.2 L386.1 460.0 L380.3 459.0 L374.8 458.0 L369.5 457.0 L364.2 456.1 L359.0 455.1 L353.9 454.2 L348.9 453.3 L344.0 452.4 L339.3 451.6 L334.6 450.8 L330.0 450.0 L325.6 449.3 L321.3 448.6 L317.2 447.9 L313.3 447.3 L309.4 446.7 L305.5 446.1 L301.7 445.5 L297.8 445.0 L294.0 444.5 L290.0 444.0 L286.0 443.5 L282.0 443.1 L278.0 442.7 L274.0 442.3 L270.0 442.0 L266.0 441.6 L262.0 441.3 L258.0 440.9 L254.0 440.6 L250.0 440.3 L246.0 440.0 L242.0 439.7 L238.0 439.4 L234.0 439.1 L229.9 438.8 L225.9 438.5 L221.9 438.2 L217.9 438.0 L214.0 437.7 L210.0 437.5 L206.2 437.3 L202.5 437.1 L198.9 436.8 L195.3 436.6 L191.8 436.4 L188.1 436.3 L184.2 436.1 L180.1 435.9 L175.7 435.8 L171.0 435.6 L165.9 435.4 L160.3 435.3 L154.5 435.1 L148.5 435.0 L142.3 434.8 L136.0 434.7 L129.7 434.6 L123.3 434.5 L117.1 434.4 L111.0 434.4 L104.9 434.4 L98.7 434.4 L92.4 434.5 L86.1 434.5 L79.8 434.6 L73.6 434.7 L67.6 434.8 L61.8 434.9 L56.2 435.0 L51.0 435.1 L45.9 435.2 L40.9 435.3 L36.0 435.4 L31.3 435.6 L26.8 435.7 L22.5 435.8 L18.7 435.9 L15.3 436.0 L12.4 436.1 L10.0 436.2 L10.0 465.6 L12.4 465.5 L15.3 465.4 L18.7 465.3 L22.5 465.2 L26.8 465.1 L31.3 464.9 L36.0 464.8 L40.9 464.6 L45.9 464.5 L51.0 464.3 L56.2 464.1 L61.8 463.9 L67.6 463.7 L73.6 463.4 L79.8 463.2 L86.1 462.9 L92.4 462.7 L98.7 462.5 L104.9 462.4 L111.0 462.3 L117.1 462.3 L123.3 462.3 L129.7 462.3 L136.0 462.4 L142.3 462.5 L148.5 462.6 L154.5 462.7 L160.3 462.8 L165.9 463.0 L171.0 463.1 L175.7 463.2 L180.1 463.4 L184.2 463.5 L188.1 463.7 L191.8 463.9 L195.3 464.1 L198.9 464.3 L202.5 464.5 L206.2 464.7 L210.0 465.0 L214.0 465.3 L217.9 465.6 L221.9 465.9 L225.9 466.2 L229.9 466.6 L234.0 467.0 L238.0 467.3 L242.0 467.7 L246.0 468.1 L250.0 468.5 L254.0 468.9 L258.0 469.3 L262.0 469.7 L266.0 470.1 L270.0 470.5 L274.0 470.9 L278.0 471.4 L282.0 471.8 L286.0 472.3 L290.0 472.8 L294.0 473.3 L297.8 473.8 L301.7 474.3 L305.5 474.8 L309.4 475.3 L313.3 475.8 L317.2 476.4 L321.3 477.1 L325.6 477.7 L330.0 478.5 L334.6 479.3 L339.4 480.2 L344.3 481.2 L349.3 482.2 L354.4 483.2 L359.6 484.3 L364.8 485.3 L370.0 486.4 L375.2 487.5 L380.3 488.6 L385.5 489.7 L390.8 490.8 L396.2 492.0 L401.7 493.1 L407.1 494.3 L412.4 495.5 L417.7 496.6 L422.8 497.8 L427.6 498.9 L432.2 500.0 L436.5 501.0 L440.5 502.0 L444.2 503.0 L447.8 504.0 L451.3 504.9 L454.8 505.9 L458.2 506.8 L461.7 507.8 L465.3 508.9 L469.1 510.0 L473.1 511.2 L477.4 512.5 L481.8 513.8 L486.2 515.2 L490.6 516.6 L495.0 517.9 L499.2 519.3 L503.1 520.6 L506.8 521.8 L510.0 522.9 L512.8 523.9 L515.3 524.8 L517.4 525.6 L519.3 526.4 L521.1 527.1 L522.7 527.9 L524.3 528.6 L525.9 529.3 L527.6 530.1 L529.5 531.0 L531.5 531.9 L533.4 532.8 L535.4 533.8 L537.4 534.8 L539.3 535.8 L541.3 536.8 L543.3 537.8 L545.2 538.8 L547.1 539.8 L549.0 540.8 L550.9 541.8 L552.8 542.9 L554.7 543.9 L556.6 545.0 L558.5 546.0 L560.3 547.1 L562.1 548.2 L563.8 549.2 L565.5 550.2 L567.1 551.2 L568.6 552.2 L570.1 553.1 L571.5 554.0 L572.9 555.0 L574.2 555.9 L575.5 556.8 L576.7 557.7 L577.9 558.5 L579.0 559.4 L580.1 560.3 L581.1 561.2 L582.0 562.0 L582.8 562.7 L583.6 563.5 L584.3 564.3 L585.0 565.1 L585.7 565.9 L586.4 566.8 L587.1 567.7 L587.9 568.7 L588.7 569.8 L589.5 570.9 L590.2 572.0 L591.0 573.2 L591.8 574.5 L592.6 575.7 L593.4 577.0 L594.1 578.3 L594.9 579.7 L595.7 581.0 L596.5 582.3 L597.2 583.6 L597.8 584.8 L598.5 586.1 L599.2 587.4 L599.9 588.7 L600.7 590.2 L601.5 591.7 L602.5 593.4 L603.5 595.3 L604.6 597.2 L605.6 599.0 L606.7 600.7 L607.7 602.6 L608.9 604.6 L610.3 606.8 L611.8 609.4 L613.5 612.4 L615.5 615.9 L617.8 620.0 L620.6 625.0 L623.9 630.9 L627.6 637.6 L631.6 644.7 L635.6 652.0 L639.7 659.3 L643.6 666.4 L647.2 672.9 L650.4 678.7 L653.1 683.5 L655.3 687.4 L657.1 690.7 L658.6 693.5 L659.9 695.8 L661.0 697.7 L661.8 699.3 L662.6 700.7 L663.2 701.9 L663.8 703.0 L664.4 704.0 L708.8 704.0 L708.3 703.1 L707.8 702.2 L707.3 701.3 L706.7 700.3 L706.0 699.0 L705.0 697.2 L703.7 694.9 L702.1 692.0 L700.0 688.2 L697.5 683.5 L694.4 677.7 L690.7 670.7 L686.5 662.9 L682.0 654.3 L677.2 645.2 L672.3 635.9 L667.2 626.5 L662.2 617.3 L657.2 608.3 L652.5 600.0 L647.8 591.9 L643.0 583.8 L638.0 575.6 L633.0 567.5 L628.1 559.5 L623.2 551.7 L618.4 544.1 L613.9 536.9 L609.5 530.0 L605.5 523.6 L601.8 517.7 L598.3 512.3 L595.1 507.4 L592.1 502.7 L589.2 498.4 L586.4 494.1 L583.7 489.9 L580.9 485.7 L578.0 481.3 L575.1 476.8 L572.2 472.2 L569.4 467.8 L566.8 463.5 L564.1 459.2 L561.5 454.9 L558.7 450.5 L555.8 445.8 L552.6 440.9 L549.1 435.7 L545.3 430.0 L541.1 423.9 L536.6 417.5 L531.9 410.8 L527.0 403.8 L521.9 396.6 L516.6 389.2 L511.2 381.7 L505.6 374.2 L500.0 366.6 L494.4 359.0 L488.7 351.4 L482.8 343.6 L476.7 335.7 L470.6 327.6 L464.3 319.6 L458.0 311.4 L451.6 303.3 L445.2 295.1 L438.8 287.0 L432.3 279.0 L425.8 271.0 L419.3 263.0 L412.8 255.0 L406.2 247.0 L399.6 239.0 L392.9 231.0 L386.1 223.0 L379.3 215.0 L372.4 207.0 L365.5 199.0 L358.3 190.8 L350.7 182.3 L343.0 173.7 L335.1 165.0 L327.2 156.4 L319.5 148.0 L312.1 140.0 L305.1 132.4 L298.6 125.3 L292.8 119.0 L287.6 113.3 L282.7 108.0 L278.2 103.1 L274.1 98.6 L270.3 94.5 L266.9 90.8 L263.9 87.5 L261.2 84.6 L258.9 82.1 L256.9 80.0Z" fill="#484848" stroke="#f40000" stroke-width="1.05"/><rect x="378.6" y="222.5" width="6" height="6" fill="#c4c4c4" stroke="#d6d6d6" stroke-width="1"/><rect x="465.5" y="370.4" width="6" height="6" fill="#c4c4c4" stroke="#d6d6d6" stroke-width="1"/><rect x="532.5" y="429.5" width="6" height="6" fill="#c4c4c4" stroke="#d6d6d6" stroke-width="1"/><rect x="430.5" y="474.3" width="6" height="6" fill="#c4c4c4" stroke="#d6d6d6" stroke-width="1"/><rect x="517.5" y="483.4" width="6" height="6" fill="#c4c4c4" stroke="#d6d6d6" stroke-width="1"/><rect x="495.5" y="497.3" width="6" height="6" fill="#c4c4c4" stroke="#d6d6d6" stroke-width="1"/><rect x="547.4" y="525.5" width="6" height="6" fill="#c4c4c4" stroke="#d6d6d6" stroke-width="1"/><rect x="596.5" y="523.4" width="6" height="6" fill="#c4c4c4" stroke="#d6d6d6" stroke-width="1"/><rect x="589.6" y="553.5" width="6" height="6" fill="#c4c4c4" stroke="#d6d6d6" stroke-width="1"/><rect x="659.5" y="660.5" width="6" height="6" fill="#c4c4c4" stroke="#d6d6d6" stroke-width="1"/><rect x="676.5" y="667.4" width="6" height="6" fill="#c4c4c4" stroke="#d6d6d6" stroke-width="1"/><rect x="665.5" y="680.0" width="6" height="6" fill="#c4c4c4" stroke="#d6d6d6" stroke-width="1"/><rect x="117.3" y="452.2" width="6" height="6" fill="#c4c4c4" stroke="#d6d6d6" stroke-width="1"/><rect x="377.2" y="465.5" width="6" height="6" fill="#c4c4c4" stroke="#d6d6d6" stroke-width="1"/><rect x="363.6" y="476.4" width="6" height="6" fill="#c4c4c4" stroke="#d6d6d6" stroke-width="1"/><path d="M496.4 412.8 l3.7 3.7 l-3.7 3.7 l-3.7 -3.7 Z" fill="#d0d0d0"/><path d="M548.5 445.8 l4.7 4.7 l-4.7 4.7 l-4.7 -4.7 Z" fill="#d0d0d0"/><path d="M458.4 497.8 l3.7 3.7 l-3.7 3.7 l-3.7 -3.7 Z" fill="#d0d0d0"/><path d="M661.5 636.8 l4.7 4.7 l-4.7 4.7 l-4.7 -4.7 Z" fill="#d0d0d0"/></g></svg><svg style="left:0;top:0" width="1280" height="770" viewBox="0 0 1280 770" shape-rendering="crispEdges"><rect x="51" y="116.3" width="830" height="1.6" fill="#000" shape-rendering="geometricPrecision"/><rect x="51.0" y="112.0" width="1" height="4.0" fill="#000"/><rect x="58.0" y="114.0" width="1" height="2.0" fill="#000"/><rect x="66.0" y="112.0" width="1" height="4.0" fill="#000"/><rect x="74.0" y="114.0" width="1" height="2.0" fill="#000"/><rect x="82.0" y="112.0" width="1" height="4.0" fill="#000"/><rect x="90.0" y="114.0" width="1" height="2.0" fill="#000"/><rect x="98.0" y="106.0" width="1" height="10.0" fill="#000"/><rect x="106.0" y="114.0" width="1" height="2.0" fill="#000"/><rect x="114.0" y="112.0" width="1" height="4.0" fill="#000"/><rect x="122.0" y="114.0" width="1" height="2.0" fill="#000"/><rect x="130.0" y="112.0" width="1" height="4.0" fill="#000"/><rect x="138.0" y="114.0" width="1" height="2.0" fill="#000"/><rect x="146.0" y="112.0" width="1" height="4.0" fill="#000"/><rect x="154.0" y="114.0" width="1" height="2.0" fill="#000"/><rect x="161.0" y="112.0" width="1" height="4.0" fill="#000"/><rect x="169.0" y="114.0" width="1" height="2.0" fill="#000"/><rect x="177.0" y="106.0" width="1" height="10.0" fill="#000"/><rect x="185.0" y="114.0" width="1" height="2.0" fill="#000"/><rect x="193.0" y="112.0" width="1" height="4.0" fill="#000"/><rect x="201.0" y="114.0" width="1" height="2.0" fill="#000"/><rect x="209.0" y="112.0" width="1" height="4.0" fill="#000"/><rect x="217.0" y="114.0" width="1" height="2.0" fill="#000"/><rect x="225.0" y="112.0" width="1" height="4.0" fill="#000"/><rect x="233.0" y="114.0" width="1" height="2.0" fill="#000"/><rect x="241.0" y="112.0" width="1" height="4.0" fill="#000"/><rect x="249.0" y="114.0" width="1" height="2.0" fill="#000"/><rect x="256.0" y="106.0" width="1" height="10.0" fill="#000"/><rect x="264.0" y="114.0" width="1" height="2.0" fill="#000"/><rect x="272.0" y="112.0" width="1" height="4.0" fill="#000"/><rect x="280.0" y="114.0" width="1" height="2.0" fill="#000"/><rect x="288.0" y="112.0" width="1" height="4.0" fill="#000"/><rect x="296.0" y="114.0" width="1" height="2.0" fill="#000"/><rect x="304.0" y="112.0" width="1" height="4.0" fill="#000"/><rect x="312.0" y="114.0" width="1" height="2.0" fill="#000"/><rect x="320.0" y="112.0" width="1" height="4.0" fill="#000"/><rect x="328.0" y="114.0" width="1" height="2.0" fill="#000"/><rect x="336.0" y="106.0" width="1" height="10.0" fill="#000"/><rect x="344.0" y="114.0" width="1" height="2.0" fill="#000"/><rect x="352.0" y="112.0" width="1" height="4.0" fill="#000"/><rect x="359.0" y="114.0" width="1" height="2.0" fill="#000"/><rect x="367.0" y="112.0" width="1" height="4.0" fill="#000"/><rect x="375.0" y="114.0" width="1" height="2.0" fill="#000"/><rect x="383.0" y="112.0" width="1" height="4.0" fill="#000"/><rect x="391.0" y="114.0" width="1" height="2.0" fill="#000"/><rect x="399.0" y="112.0" width="1" height="4.0" fill="#000"/><rect x="407.0" y="114.0" width="1" height="2.0" fill="#000"/><rect x="415.0" y="106.0" width="1" height="10.0" fill="#000"/><rect x="423.0" y="114.0" width="1" height="2.0" fill="#000"/><rect x="431.0" y="112.0" width="1" height="4.0" fill="#000"/><rect x="439.0" y="114.0" width="1" height="2.0" fill="#000"/><rect x="447.0" y="112.0" width="1" height="4.0" fill="#000"/><rect x="454.0" y="114.0" width="1" height="2.0" fill="#000"/><rect x="462.0" y="112.0" width="1" height="4.0" fill="#000"/><rect x="470.0" y="114.0" width="1" height="2.0" fill="#000"/><rect x="478.0" y="112.0" width="1" height="4.0" fill="#000"/><rect x="486.0" y="114.0" width="1" height="2.0" fill="#000"/><rect x="494.0" y="106.0" width="1" height="10.0" fill="#000"/><rect x="502.0" y="114.0" width="1" height="2.0" fill="#000"/><rect x="510.0" y="112.0" width="1" height="4.0" fill="#000"/><rect x="518.0" y="114.0" width="1" height="2.0" fill="#000"/><rect x="526.0" y="112.0" width="1" height="4.0" fill="#000"/><rect x="534.0" y="114.0" width="1" height="2.0" fill="#000"/><rect x="542.0" y="112.0" width="1" height="4.0" fill="#000"/><rect x="550.0" y="114.0" width="1" height="2.0" fill="#000"/><rect x="557.0" y="112.0" width="1" height="4.0" fill="#000"/><rect x="565.0" y="114.0" width="1" height="2.0" fill="#000"/><rect x="573.0" y="106.0" width="1" height="10.0" fill="#000"/><rect x="581.0" y="114.0" width="1" height="2.0" fill="#000"/><rect x="589.0" y="112.0" width="1" height="4.0" fill="#000"/><rect x="597.0" y="114.0" width="1" height="2.0" fill="#000"/><rect x="605.0" y="112.0" width="1" height="4.0" fill="#000"/><rect x="613.0" y="114.0" width="1" height="2.0" fill="#000"/><rect x="621.0" y="112.0" width="1" height="4.0" fill="#000"/><rect x="629.0" y="114.0" width="1" height="2.0" fill="#000"/><rect x="637.0" y="112.0" width="1" height="4.0" fill="#000"/><rect x="645.0" y="114.0" width="1" height="2.0" fill="#000"/><rect x="652.0" y="106.0" width="1" height="10.0" fill="#000"/><rect x="660.0" y="114.0" width="1" height="2.0" fill="#000"/><rect x="668.0" y="112.0" width="1" height="4.0" fill="#000"/><rect x="676.0" y="114.0" width="1" height="2.0" fill="#000"/><rect x="684.0" y="112.0" width="1" height="4.0" fill="#000"/><rect x="692.0" y="114.0" width="1" height="2.0" fill="#000"/><rect x="700.0" y="112.0" width="1" height="4.0" fill="#000"/><rect x="708.0" y="114.0" width="1" height="2.0" fill="#000"/><rect x="716.0" y="112.0" width="1" height="4.0" fill="#000"/><rect x="724.0" y="114.0" width="1" height="2.0" fill="#000"/><rect x="732.0" y="106.0" width="1" height="10.0" fill="#000"/><rect x="740.0" y="114.0" width="1" height="2.0" fill="#000"/><rect x="748.0" y="112.0" width="1" height="4.0" fill="#000"/><rect x="755.0" y="114.0" width="1" height="2.0" fill="#000"/><rect x="763.0" y="112.0" width="1" height="4.0" fill="#000"/><rect x="771.0" y="114.0" width="1" height="2.0" fill="#000"/><rect x="779.0" y="112.0" width="1" height="4.0" fill="#000"/><rect x="787.0" y="114.0" width="1" height="2.0" fill="#000"/><rect x="795.0" y="112.0" width="1" height="4.0" fill="#000"/><rect x="803.0" y="114.0" width="1" height="2.0" fill="#000"/><rect x="811.0" y="106.0" width="1" height="10.0" fill="#000"/><rect x="819.0" y="114.0" width="1" height="2.0" fill="#000"/><rect x="827.0" y="112.0" width="1" height="4.0" fill="#000"/><rect x="835.0" y="114.0" width="1" height="2.0" fill="#000"/><rect x="843.0" y="112.0" width="1" height="4.0" fill="#000"/><rect x="850.0" y="114.0" width="1" height="2.0" fill="#000"/><rect x="858.0" y="112.0" width="1" height="4.0" fill="#000"/><rect x="866.0" y="114.0" width="1" height="2.0" fill="#000"/><rect x="874.0" y="112.0" width="1" height="4.0" fill="#000"/><rect x="49.3" y="120" width="1.6" height="563" fill="#000" shape-rendering="geometricPrecision"/><rect x="38" y="120" width="12" height="1" fill="#000"/><rect x="44.0" y="128.0" width="5.0" height="1" fill="#000"/><rect x="46.0" y="136.0" width="3.0" height="1" fill="#000"/><rect x="44.0" y="144.0" width="5.0" height="1" fill="#000"/><rect x="46.0" y="152.0" width="3.0" height="1" fill="#000"/><rect x="44.0" y="160.0" width="5.0" height="1" fill="#000"/><rect x="46.0" y="168.0" width="3.0" height="1" fill="#000"/><rect x="44.0" y="175.0" width="5.0" height="1" fill="#000"/><rect x="46.0" y="183.0" width="3.0" height="1" fill="#000"/><rect x="38.0" y="191.0" width="11.0" height="1" fill="#000"/><rect x="46.0" y="199.0" width="3.0" height="1" fill="#000"/><rect x="44.0" y="207.0" width="5.0" height="1" fill="#000"/><rect x="46.0" y="215.0" width="3.0" height="1" fill="#000"/><rect x="44.0" y="223.0" width="5.0" height="1" fill="#000"/><rect x="46.0" y="231.0" width="3.0" height="1" fill="#000"/><rect x="44.0" y="239.0" width="5.0" height="1" fill="#000"/><rect x="46.0" y="247.0" width="3.0" height="1" fill="#000"/><rect x="44.0" y="255.0" width="5.0" height="1" fill="#000"/><rect x="46.0" y="263.0" width="3.0" height="1" fill="#000"/><rect x="38.0" y="270.0" width="11.0" height="1" fill="#000"/><rect x="46.0" y="278.0" width="3.0" height="1" fill="#000"/><rect x="44.0" y="286.0" width="5.0" height="1" fill="#000"/><rect x="46.0" y="294.0" width="3.0" height="1" fill="#000"/><rect x="44.0" y="302.0" width="5.0" height="1" fill="#000"/><rect x="46.0" y="310.0" width="3.0" height="1" fill="#000"/><rect x="44.0" y="318.0" width="5.0" height="1" fill="#000"/><rect x="46.0" y="326.0" width="3.0" height="1" fill="#000"/><rect x="44.0" y="334.0" width="5.0" height="1" fill="#000"/><rect x="46.0" y="342.0" width="3.0" height="1" fill="#000"/><rect x="38.0" y="350.0" width="11.0" height="1" fill="#000"/><rect x="46.0" y="358.0" width="3.0" height="1" fill="#000"/><rect x="44.0" y="366.0" width="5.0" height="1" fill="#000"/><rect x="46.0" y="373.0" width="3.0" height="1" fill="#000"/><rect x="44.0" y="381.0" width="5.0" height="1" fill="#000"/><rect x="46.0" y="389.0" width="3.0" height="1" fill="#000"/><rect x="44.0" y="397.0" width="5.0" height="1" fill="#000"/><rect x="46.0" y="405.0" width="3.0" height="1" fill="#000"/><rect x="44.0" y="413.0" width="5.0" height="1" fill="#000"/><rect x="46.0" y="421.0" width="3.0" height="1" fill="#000"/><rect x="38.0" y="429.0" width="11.0" height="1" fill="#000"/><rect x="46.0" y="437.0" width="3.0" height="1" fill="#000"/><rect x="44.0" y="445.0" width="5.0" height="1" fill="#000"/><rect x="46.0" y="453.0" width="3.0" height="1" fill="#000"/><rect x="44.0" y="461.0" width="5.0" height="1" fill="#000"/><rect x="46.0" y="468.0" width="3.0" height="1" fill="#000"/><rect x="44.0" y="476.0" width="5.0" height="1" fill="#000"/><rect x="46.0" y="484.0" width="3.0" height="1" fill="#000"/><rect x="44.0" y="492.0" width="5.0" height="1" fill="#000"/><rect x="46.0" y="500.0" width="3.0" height="1" fill="#000"/><rect x="38.0" y="508.0" width="11.0" height="1" fill="#000"/><rect x="46.0" y="516.0" width="3.0" height="1" fill="#000"/><rect x="44.0" y="524.0" width="5.0" height="1" fill="#000"/><rect x="46.0" y="532.0" width="3.0" height="1" fill="#000"/><rect x="44.0" y="540.0" width="5.0" height="1" fill="#000"/><rect x="46.0" y="548.0" width="3.0" height="1" fill="#000"/><rect x="44.0" y="556.0" width="5.0" height="1" fill="#000"/><rect x="46.0" y="564.0" width="3.0" height="1" fill="#000"/><rect x="44.0" y="571.0" width="5.0" height="1" fill="#000"/><rect x="46.0" y="579.0" width="3.0" height="1" fill="#000"/><rect x="38.0" y="587.0" width="11.0" height="1" fill="#000"/><rect x="46.0" y="595.0" width="3.0" height="1" fill="#000"/><rect x="44.0" y="603.0" width="5.0" height="1" fill="#000"/><rect x="46.0" y="611.0" width="3.0" height="1" fill="#000"/><rect x="44.0" y="619.0" width="5.0" height="1" fill="#000"/><rect x="46.0" y="627.0" width="3.0" height="1" fill="#000"/><rect x="44.0" y="635.0" width="5.0" height="1" fill="#000"/><rect x="46.0" y="643.0" width="3.0" height="1" fill="#000"/><rect x="44.0" y="651.0" width="5.0" height="1" fill="#000"/><rect x="46.0" y="659.0" width="3.0" height="1" fill="#000"/><rect x="38.0" y="666.0" width="11.0" height="1" fill="#000"/><rect x="46.0" y="674.0" width="3.0" height="1" fill="#000"/><rect x="44.0" y="682.0" width="5.0" height="1" fill="#000"/></svg><div class="t" style="left:100.2px;top:107.3px;font-size:7.5px;letter-spacing:-.25px;color:#000;-webkit-text-stroke:.25px #000">550</div><div class="t" style="left:179.4px;top:107.3px;font-size:7.5px;letter-spacing:-.25px;color:#000;-webkit-text-stroke:.25px #000">560</div><div class="t" style="left:258.6px;top:107.3px;font-size:7.5px;letter-spacing:-.25px;color:#000;-webkit-text-stroke:.25px #000">570</div><div class="t" style="left:337.8px;top:107.3px;font-size:7.5px;letter-spacing:-.25px;color:#000;-webkit-text-stroke:.25px #000">580</div><div class="t" style="left:417.0px;top:107.3px;font-size:7.5px;letter-spacing:-.25px;color:#000;-webkit-text-stroke:.25px #000">590</div><div class="t" style="left:496.2px;top:107.3px;font-size:7.5px;letter-spacing:-.25px;color:#000;-webkit-text-stroke:.25px #000">600</div><div class="t" style="left:575.4px;top:107.3px;font-size:7.5px;letter-spacing:-.25px;color:#000;-webkit-text-stroke:.25px #000">610</div><div class="t" style="left:654.6px;top:107.3px;font-size:7.5px;letter-spacing:-.25px;color:#000;-webkit-text-stroke:.25px #000">620</div><div class="t" style="left:733.8px;top:107.3px;font-size:7.5px;letter-spacing:-.25px;color:#000;-webkit-text-stroke:.25px #000">630</div><div class="t" style="left:813.0px;top:107.3px;font-size:7.5px;letter-spacing:-.25px;color:#000;-webkit-text-stroke:.25px #000">640</div><div class="a" style="left:41px;top:119px;width:3px;height:1px;background:#222"></div><div class="t" style="left:39px;top:121.8px;font-size:7.4px;color:#000;-webkit-text-stroke:.12px #000">7</div><div class="t" style="left:39px;top:130.0px;font-size:7.4px;color:#000;-webkit-text-stroke:.12px #000">0</div><div class="t" style="left:39px;top:192.8px;font-size:7.4px;color:#000;-webkit-text-stroke:.12px #000">5</div><div class="t" style="left:39px;top:201.0px;font-size:7.4px;color:#000;-webkit-text-stroke:.12px #000">6</div><div class="t" style="left:39px;top:209.2px;font-size:7.4px;color:#000;-webkit-text-stroke:.12px #000">0</div><div class="t" style="left:39px;top:272.0px;font-size:7.4px;color:#000;-webkit-text-stroke:.12px #000">5</div><div class="t" style="left:39px;top:280.2px;font-size:7.4px;color:#000;-webkit-text-stroke:.12px #000">5</div><div class="t" style="left:39px;top:288.4px;font-size:7.4px;color:#000;-webkit-text-stroke:.12px #000">0</div><div class="t" style="left:39px;top:351.2px;font-size:7.4px;color:#000;-webkit-text-stroke:.12px #000">5</div><div class="t" style="left:39px;top:359.4px;font-size:7.4px;color:#000;-webkit-text-stroke:.12px #000">4</div><div class="t" style="left:39px;top:367.6px;font-size:7.4px;color:#000;-webkit-text-stroke:.12px #000">0</div><div class="t" style="left:39px;top:430.4px;font-size:7.4px;color:#000;-webkit-text-stroke:.12px #000">5</div><div class="t" style="left:39px;top:438.6px;font-size:7.4px;color:#000;-webkit-text-stroke:.12px #000">3</div><div class="t" style="left:39px;top:446.8px;font-size:7.4px;color:#000;-webkit-text-stroke:.12px #000">0</div><div class="t" style="left:39px;top:509.6px;font-size:7.4px;color:#000;-webkit-text-stroke:.12px #000">5</div><div class="t" style="left:39px;top:517.8px;font-size:7.4px;color:#000;-webkit-text-stroke:.12px #000">2</div><div class="t" style="left:39px;top:526.0px;font-size:7.4px;color:#000;-webkit-text-stroke:.12px #000">0</div><div class="t" style="left:39px;top:588.8px;font-size:7.4px;color:#000;-webkit-text-stroke:.12px #000">5</div><div class="t" style="left:39px;top:597.0px;font-size:7.4px;color:#000;-webkit-text-stroke:.12px #000">1</div><div class="t" style="left:39px;top:605.2px;font-size:7.4px;color:#000;-webkit-text-stroke:.12px #000">0</div><div class="t" style="left:39px;top:668.0px;font-size:7.4px;color:#000;-webkit-text-stroke:.12px #000">5</div><div class="t" style="left:39px;top:676.2px;font-size:7.4px;color:#000;-webkit-text-stroke:.12px #000">0</div><svg style="left:44px;top:360.5px" width="5" height="8" viewBox="0 0 5 8"><path d="M0 0 L5 4 L0 8Z" fill="#000"/></svg><svg style="left:500px;top:112.6px" width="8" height="5" viewBox="0 0 8 5"><path d="M0 0 L8 0 L4 4.6Z" fill="#000"/></svg><svg style="left:884px;top:105px" width="18" height="18" viewBox="0 0 18 18"><circle cx="7.6" cy="7.6" r="6.1" fill="#f4f5f0" stroke="#333" stroke-width="1.3"/><path d="M12.2 12.2 L16.4 16" stroke="#333" stroke-width="2.2" stroke-linecap="round"/><text x="7.6" y="10.2" font-size="7" font-weight="bold" text-anchor="middle" font-family="Liberation Sans" fill="#333">1:1</text></svg><svg style="left:0;top:0" width="1280" height="770" viewBox="0 0 1280 770"><rect x="51" y="685" width="832" height="17" fill="#efefef"/><rect x="51" y="685" width="832" height="1" fill="#f8f8f8"/><path d="M56.5 693.5 l4 -4 l0 8Z" fill="#3a3a3a"/><path d="M876.5 693.5 l-4 -4 l0 8Z" fill="#3a3a3a"/><rect x="533.5" y="686.5" width="35" height="14" rx="2" fill="url(#thg)" stroke="#9a9a9a"/><defs><linearGradient id="thg" x1="0" y1="0" x2="0" y2="1"><stop offset="0" stop-color="#f6f6f6"/><stop offset=".5" stop-color="#e9e9e9"/><stop offset=".5" stop-color="#dcdcdc"/><stop offset="1" stop-color="#d0d0d0"/></linearGradient><linearGradient id="tvg" x1="0" y1="0" x2="1" y2="0"><stop offset="0" stop-color="#f6f6f6"/><stop offset=".5" stop-color="#e9e9e9"/><stop offset=".5" stop-color="#dcdcdc"/><stop offset="1" stop-color="#d0d0d0"/></linearGradient></defs><rect x="547" y="690" width="1" height="7" fill="#444"/><rect x="550" y="690" width="1" height="7" fill="#444"/><rect x="553" y="690" width="1" height="7" fill="#444"/><rect x="885" y="124" width="16" height="560" fill="#efefef"/><path d="M893.5 131 l4 4 l-8 0Z" fill="#3a3a3a"/><path d="M893.5 678 l4 -4 l-8 0Z" fill="#3a3a3a"/><rect x="885.5" y="356.5" width="14" height="14" rx="1.5" fill="url(#tvg)" stroke="#9a9a9a"/><rect x="889" y="360" width="7" height="1" fill="#444"/><rect x="889" y="363" width="7" height="1" fill="#444"/><rect x="889" y="366" width="7" height="1" fill="#444"/><defs><linearGradient id="cm" x1="0" y1="0" x2="1" y2="1"><stop offset="0" stop-color="#1fa03a"/><stop offset=".5" stop-color="#2a9a4a"/><stop offset=".72" stop-color="#3a4ad0"/><stop offset="1" stop-color="#d02a60"/></linearGradient></defs><defs><pattern id="hx" width="2" height="2" patternUnits="userSpaceOnUse"><rect x="0" y="0" width="1" height="1" fill="#f0f0f0" opacity=".75"/><rect x="1" y="1" width="1" height="1" fill="#f0f0f0" opacity=".75"/></pattern></defs><path d="M888.6 687.2 L898.8 696 L890 700.8 Q887.4 694 888.6 687.2Z" fill="url(#cm)"/><path d="M888.6 687.2 L898.8 696 L890 700.8 Q887.4 694 888.6 687.2Z" fill="url(#hx)"/></svg><div class="a" style="left:910px;top:104px;width:2px;height:600px;background:#0a0a0a"></div><div class="a" style="left:910px;top:104px;width:338px;height:1.5px;background:#0a0a0a"></div><div class="a" style="left:1248px;top:104px;width:1px;height:600px;background:#e4e4e4"></div><div class="a" style="left:912px;top:127px;width:334px;height:1px;background:#a0a0a0"></div><div class="t" style="left:926px;top:110px;font-size:12px;letter-spacing:-.1px">Ebenen (Umschalt+Strg+L)</div><svg style="left:913px;top:109px" width="14" height="12" viewBox="0 0 14 12"><g fill="#f2f2f2" stroke="#222" stroke-width=".9"><path d="M1 7.2 L10.5 7.2 L13 10.6 L3.5 10.6Z"/><path d="M1 4.6 L10.5 4.6 L13 8 L3.5 8Z"/><path d="M1 2 L10.5 2 L13 5.4 L3.5 5.4Z"/></g></svg><div class="a" style="left:1208px;top:110px;width:11px;height:11px;border:1px solid #8a8a8a;border-radius:2px;background:#f4f4f4"></div><svg style="left:1208px;top:110px" width="11" height="11" viewBox="0 0 11 11"><path d="M3.5 5.5 l3 -3 l0 6Z" fill="#555"/></svg><div class="a" style="left:1230px;top:110px;width:11px;height:11px;border:1px solid #8a8a8a;border-radius:2px;background:#f4f4f4"></div><svg style="left:1230px;top:110px" width="11" height="11" viewBox="0 0 11 11"><path d="M3 3 L8 8 M8 3 L3 8" stroke="#444" stroke-width="2"/></svg><div class="a" style="left:916px;top:132px;width:326px;height:287px;background:#fff;border:1px solid #a8a8a8"></div><div class="a" style="left:918px;top:134px;width:322px;height:25px;background:#ececec"></div><div class="t" style="left:988px;top:141px;font-size:11.5px;word-spacing:-1.2px">Ebene 1</div><svg style="left:923px;top:140px" width="15" height="12" viewBox="0 0 15 12"><path d="M1 7 Q7.5 1.5 14 7 Q7.5 11.5 1 7Z" fill="#fff" stroke="#111" stroke-width="1.1"/><circle cx="7.5" cy="7" r="2.6" fill="#111"/><path d="M2.4 3.4 L3.6 4.8 M4.8 1.6 L5.6 3.4 M7.5 0.8 L7.5 2.8 M10.2 1.6 L9.4 3.4 M12.6 3.4 L11.4 4.8" stroke="#111" stroke-width="1"/></svg><svg style="left:949px;top:139px" width="12" height="14" viewBox="0 0 12 14"><path d="M3 7 L3 3.6 Q3 1 6 1 Q9 1 9 3.6 L9 4.6" fill="none" stroke="#333" stroke-width="1.3"/><rect x="1.2" y="6.2" width="9.6" height="7" rx="1" fill="#f1dc6a" stroke="#7a6a1e" stroke-width=".9"/><rect x="5.2" y="8.4" width="1.8" height="2.6" fill="#5a4a10"/></svg><svg style="left:921px;top:424px" width="16" height="16" viewBox="0 0 16 16"><path d="M6.5 1.5 h3 v5 h5 v3 h-5 v5 h-3 v-5 h-5 v-3 h5z" fill="#5e8fd8" stroke="#2f5fa8" stroke-width="1"/></svg><svg style="left:947px;top:424px" width="16" height="16" viewBox="0 0 16 16"><rect x="1.5" y="6.5" width="13" height="3" fill="#8fb0e4" stroke="#4a78c0" stroke-width="1"/></svg><svg style="left:1142px;top:424px" width="16" height="16" viewBox="0 0 16 16"><g fill="#a4c98a" stroke="#6fa055" stroke-width=".9"><rect x="1.5" y="1" width="13" height="2.2"/><path d="M8 4 L13.5 9 L10.2 9 L10.2 15 L5.8 15 L5.8 9 L2.5 9Z"/></g></svg><svg style="left:1168px;top:424px" width="16" height="16" viewBox="0 0 16 16"><g fill="#a4c98a" stroke="#6fa055" stroke-width=".9"><path d="M8 2 L13.8 8 L10.4 8 L10.4 14 L5.6 14 L5.6 8 L2.2 8Z"/></g></svg><svg style="left:1194px;top:424px" width="16" height="16" viewBox="0 0 16 16"><g fill="#a4c98a" stroke="#6fa055" stroke-width=".9"><path d="M8 14 L13.8 8 L10.4 8 L10.4 2 L5.6 2 L5.6 8 L2.2 8Z"/></g></svg><svg style="left:1220px;top:424px" width="16" height="16" viewBox="0 0 16 16"><g fill="#a4c98a" stroke="#6fa055" stroke-width=".9"><rect x="1.5" y="12.8" width="13" height="2.2"/><path d="M8 12 L13.5 7 L10.2 7 L10.2 1 L5.8 1 L5.8 7 L2.5 7Z"/></g></svg><div class="t" style="left:916px;top:452px;font-size:12px">Mischmodus:</div><div class="a" style="left:1000px;top:447px;width:242px;height:21px;background:#fff;border:1px solid #abadb3;border-top-color:#8e8f8f"></div><div class="t" style="left:1003px;top:452px;font-size:12px">Normal</div><div class="a" style="left:1224px;top:448px;width:17px;height:19px;border:1px solid #707070;border-radius:2px;background:linear-gradient(#f2f2f2,#ebebeb 50%,#dddddd 50%,#cfcfcf)"></div><svg style="left:1224px;top:448px" width="17" height="19" viewBox="0 0 17 19"><path d="M8.5 12 l3.5 -3.5 l-7 0Z" fill="#000"/></svg><div class="a" style="left:917px;top:473px;width:313px;height:21px;background:#b4bcc8;border:1px solid #e8e8e8;border-bottom:2px solid #3a2a2a;border-right:1px solid #555"></div><div class="a" style="left:1227px;top:474px;width:2px;height:18px;background:#222"></div><div class="t" style="left:922px;top:477px;font-size:12px;letter-spacing:-.13px">Deckkraft (%)</div><div class="t" style="left:1198px;top:478.5px;font-size:11px">100,0</div><div class="a" style="left:1231px;top:474px;width:10px;height:10px;border:1px solid #b8b8b8;border-radius:1px;background:linear-gradient(#f6f6f6,#e4e4e4)"></div><div class="a" style="left:1231px;top:484px;width:10px;height:10px;border:1px solid #b8b8b8;border-radius:1px;background:linear-gradient(#f6f6f6,#e4e4e4)"></div><svg style="left:1231px;top:474px" width="10" height="20" viewBox="0 0 10 20"><path d="M5 3.5 l2.6 2.6 l-5.2 0Z" fill="#9a9a9a"/><path d="M5 16.5 l2.6 -2.6 l-5.2 0Z" fill="#3a5acc"/></svg><div class="a" style="left:914px;top:506px;width:332px;height:19px;border:1px solid #8e8e8e;border-radius:3px;background:linear-gradient(#fdfdfd,#f0f0f0 50%,#e2e2e2 50%,#d8d8d8)"></div><div class="t" style="left:933px;top:510px;font-size:12px">Füllung und Kontur (Umschalt+Strg+F)</div><svg style="left:1228px;top:511px" width="12" height="8" viewBox="0 0 12 8"><path d="M6 1 l4 4 l-8 0Z" fill="#8a8a8a"/></svg><svg style="left:916px;top:508px" width="15" height="15" viewBox="0 0 15 15"><path d="M1 3 L9 3 L4 13 L1 13Z" fill="#fff" stroke="#111" stroke-width="1"/><path d="M13.5 1 L14.5 2.6 L6 11.5 L3 13 L4.2 10Z" fill="#e6c24a" stroke="#111" stroke-width="1"/><path d="M3 13 L6 11.5 L4.2 10Z" fill="#111"/></svg><div class="a" style="left:914px;top:529px;width:332px;height:19px;border:1px solid #3c7fb1;border-radius:3px;background:linear-gradient(#e6f4fc,#c4e5f6 50%,#98d1ef 50%,#68b3db)"></div><div class="t" style="left:933px;top:533px;font-size:12px;letter-spacing:-.14px">Ebenen (Umschalt+Strg+L)</div><svg style="left:1228px;top:534px" width="12" height="8" viewBox="0 0 12 8"><path d="M6 1 l4 4 l-8 0Z" fill="#000"/></svg><svg style="left:917px;top:533px" width="14" height="12" viewBox="0 0 14 12"><g fill="#f2f2f2" stroke="#222" stroke-width=".9"><path d="M1 7.2 L10.5 7.2 L13 10.6 L3.5 10.6Z"/><path d="M1 4.6 L10.5 4.6 L13 8 L3.5 8Z"/><path d="M1 2 L10.5 2 L13 5.4 L3.5 5.4Z"/></g></svg><div class="a" style="left:1251px;top:103px;width:29px;height:600px;background:linear-gradient(#ffffff 0px,#e9ecf7 4px,#d3d8ee 8px,#d3d8ee 100%)"></div><div class="a" style="left:1250px;top:103px;width:1px;height:600px;background:#e9ebf4"></div><svg style="left:0;top:705px" width="1280" height="19" viewBox="0 0 1280 19" shape-rendering="crispEdges"><rect x="0" y="0" width="1264" height="18" fill="#0a0a0a"/><rect x="2" y="1.5" width="8" height="16.5" fill="#fff"/><rect x="10" y="1.5" width="8" height="16.5" fill="#000000"/><rect x="18" y="1.5" width="8" height="16.5" fill="#1a1a1a"/><rect x="26" y="1.5" width="8" height="16.5" fill="#333333"/><rect x="34" y="1.5" width="8" height="16.5" fill="#4d4d4d"/><rect x="42" y="1.5" width="8" height="16.5" fill="#666666"/><rect x="50" y="1.5" width="8" height="16.5" fill="#808080"/><rect x="58" y="1.5" width="8" height="16.5" fill="#999999"/><rect x="66" y="1.5" width="8" height="16.5" fill="#b3b3b3"/><rect x="74" y="1.5" width="8" height="16.5" fill="#cccccc"/><rect x="82" y="1.5" width="8" height="16.5" fill="#e6e6e6"/><rect x="90" y="1.5" width="8" height="16.5" fill="#ececec"/><rect x="98" y="1.5" width="8" height="16.5" fill="#f2f2f2"/><rect x="106" y="1.5" width="8" height="16.5" fill="#f9f9f9"/><rect x="114" y="1.5" width="8" height="16.5" fill="#ffffff"/><rect x="122" y="1.5" width="8" height="16.5" fill="#800000"/><rect x="130" y="1.5" width="8" height="16.5" fill="#ff0000"/><rect x="138" y="1.5" width="8" height="16.5" fill="#808000"/><rect x="146" y="1.5" width="8" height="16.5" fill="#ffff00"/><rect x="154" y="1.5" width="8" height="16.5" fill="#008000"/><rect x="162" y="1.5" width="8" height="16.5" fill="#00ff00"/><rect x="170" y="1.5" width="8" height="16.5" fill="#008080"/><rect x="178" y="1.5" width="8" height="16.5" fill="#00ffff"/><rect x="186" y="1.5" width="8" height="16.5" fill="#000080"/><rect x="194" y="1.5" width="8" height="16.5" fill="#0000ff"/><rect x="202" y="1.5" width="8" height="16.5" fill="#800080"/><rect x="210" y="1.5" width="8" height="16.5" fill="#ff00ff"/><rect x="218" y="1.5" width="8" height="16.5" fill="#2a0000"/><rect x="226" y="1.5" width="8" height="16.5" fill="#550000"/><rect x="234" y="1.5" width="8" height="16.5" fill="#800000"/><rect x="242" y="1.5" width="8" height="16.5" fill="#aa0000"/><rect x="250" y="1.5" width="8" height="16.5" fill="#d40000"/><rect x="258" y="1.5" width="8" height="16.5" fill="#ff0000"/><rect x="266" y="1.5" width="8" height="16.5" fill="#ff2b2b"/><rect x="274" y="1.5" width="8" height="16.5" fill="#ff5555"/><rect x="282" y="1.5" width="8" height="16.5" fill="#ff8080"/><rect x="290" y="1.5" width="8" height="16.5" fill="#ffaaaa"/><rect x="298" y="1.5" width="8" height="16.5" fill="#ffd4d4"/><rect x="306" y="1.5" width="8" height="16.5" fill="#280b0b"/><rect x="314" y="1.5" width="8" height="16.5" fill="#501616"/><rect x="322" y="1.5" width="8" height="16.5" fill="#782121"/><rect x="330" y="1.5" width="8" height="16.5" fill="#a02c2c"/><rect x="338" y="1.5" width="8" height="16.5" fill="#c83737"/><rect x="346" y="1.5" width="8" height="16.5" fill="#d35f5f"/><rect x="354" y="1.5" width="8" height="16.5" fill="#de8787"/><rect x="362" y="1.5" width="8" height="16.5" fill="#e9afaf"/><rect x="370" y="1.5" width="8" height="16.5" fill="#f4d7d7"/><rect x="378" y="1.5" width="8" height="16.5" fill="#241c1c"/><rect x="386" y="1.5" width="8" height="16.5" fill="#483838"/><rect x="394" y="1.5" width="8" height="16.5" fill="#6c5454"/><rect x="402" y="1.5" width="8" height="16.5" fill="#8f7070"/><rect x="410" y="1.5" width="8" height="16.5" fill="#ab9393"/><rect x="418" y="1.5" width="8" height="16.5" fill="#c7b7b7"/><rect x="426" y="1.5" width="8" height="16.5" fill="#e3dbdb"/><rect x="434" y="1.5" width="8" height="16.5" fill="#2a1100"/><rect x="442" y="1.5" width="8" height="16.5" fill="#552200"/><rect x="450" y="1.5" width="8" height="16.5" fill="#803300"/><rect x="458" y="1.5" width="8" height="16.5" fill="#aa4400"/><rect x="466" y="1.5" width="8" height="16.5" fill="#d45500"/><rect x="474" y="1.5" width="8" height="16.5" fill="#ff6600"/><rect x="482" y="1.5" width="8" height="16.5" fill="#ff802b"/><rect x="490" y="1.5" width="8" height="16.5" fill="#ff9955"/><rect x="498" y="1.5" width="8" height="16.5" fill="#ffb280"/><rect x="506" y="1.5" width="8" height="16.5" fill="#ffccaa"/><rect x="514" y="1.5" width="8" height="16.5" fill="#ffe6d4"/><rect x="522" y="1.5" width="8" height="16.5" fill="#28170b"/><rect x="530" y="1.5" width="8" height="16.5" fill="#502d16"/><rect x="538" y="1.5" width="8" height="16.5" fill="#784421"/><rect x="546" y="1.5" width="8" height="16.5" fill="#a05a2c"/><rect x="554" y="1.5" width="8" height="16.5" fill="#c87137"/><rect x="562" y="1.5" width="8" height="16.5" fill="#d38d5f"/><rect x="570" y="1.5" width="8" height="16.5" fill="#deaa87"/><rect x="578" y="1.5" width="8" height="16.5" fill="#e9c6af"/><rect x="586" y="1.5" width="8" height="16.5" fill="#f4e3d7"/><rect x="594" y="1.5" width="8" height="16.5" fill="#241f1c"/><rect x="602" y="1.5" width="8" height="16.5" fill="#483e38"/><rect x="610" y="1.5" width="8" height="16.5" fill="#6c5d54"/><rect x="618" y="1.5" width="8" height="16.5" fill="#8f7c70"/><rect x="626" y="1.5" width="8" height="16.5" fill="#ab9d93"/><rect x="634" y="1.5" width="8" height="16.5" fill="#c7beb7"/><rect x="642" y="1.5" width="8" height="16.5" fill="#e3dedb"/><rect x="650" y="1.5" width="8" height="16.5" fill="#2a2200"/><rect x="658" y="1.5" width="8" height="16.5" fill="#554400"/><rect x="666" y="1.5" width="8" height="16.5" fill="#806600"/><rect x="674" y="1.5" width="8" height="16.5" fill="#aa8800"/><rect x="682" y="1.5" width="8" height="16.5" fill="#d4aa00"/><rect x="690" y="1.5" width="8" height="16.5" fill="#ffcc00"/><rect x="698" y="1.5" width="8" height="16.5" fill="#ffd42b"/><rect x="706" y="1.5" width="8" height="16.5" fill="#ffdd55"/><rect x="714" y="1.5" width="8" height="16.5" fill="#ffe680"/><rect x="722" y="1.5" width="8" height="16.5" fill="#ffeeaa"/><rect x="730" y="1.5" width="8" height="16.5" fill="#fff6d4"/><rect x="738" y="1.5" width="8" height="16.5" fill="#28220b"/><rect x="746" y="1.5" width="8" height="16.5" fill="#504416"/><rect x="754" y="1.5" width="8" height="16.5" fill="#786721"/><rect x="762" y="1.5" width="8" height="16.5" fill="#a0892c"/><rect x="770" y="1.5" width="8" height="16.5" fill="#c8ab37"/><rect x="778" y="1.5" width="8" height="16.5" fill="#d3bc5f"/><rect x="786" y="1.5" width="8" height="16.5" fill="#decd87"/><rect x="794" y="1.5" width="8" height="16.5" fill="#e9ddaf"/><rect x="802" y="1.5" width="8" height="16.5" fill="#f4eed7"/><rect x="810" y="1.5" width="8" height="16.5" fill="#24221c"/><rect x="818" y="1.5" width="8" height="16.5" fill="#484538"/><rect x="826" y="1.5" width="8" height="16.5" fill="#6c6754"/><rect x="834" y="1.5" width="8" height="16.5" fill="#8f8970"/><rect x="842" y="1.5" width="8" height="16.5" fill="#aba793"/><rect x="850" y="1.5" width="8" height="16.5" fill="#c7c4b7"/><rect x="858" y="1.5" width="8" height="16.5" fill="#e3e2db"/><rect x="866" y="1.5" width="8" height="16.5" fill="#222a00"/><rect x="874" y="1.5" width="8" height="16.5" fill="#445500"/><rect x="882" y="1.5" width="8" height="16.5" fill="#668000"/><rect x="890" y="1.5" width="8" height="16.5" fill="#88aa00"/><rect x="898" y="1.5" width="8" height="16.5" fill="#aad400"/><rect x="906" y="1.5" width="8" height="16.5" fill="#ccff00"/><rect x="914" y="1.5" width="8" height="16.5" fill="#d4ff2b"/><rect x="922" y="1.5" width="8" height="16.5" fill="#ddff55"/><rect x="930" y="1.5" width="8" height="16.5" fill="#e5ff80"/><rect x="938" y="1.5" width="8" height="16.5" fill="#eeffaa"/><rect x="946" y="1.5" width="8" height="16.5" fill="#f6ffd4"/><rect x="954" y="1.5" width="8" height="16.5" fill="#22280b"/><rect x="962" y="1.5" width="8" height="16.5" fill="#445016"/><rect x="970" y="1.5" width="8" height="16.5" fill="#677821"/><rect x="978" y="1.5" width="8" height="16.5" fill="#89a02c"/><rect x="986" y="1.5" width="8" height="16.5" fill="#abc837"/><rect x="994" y="1.5" width="8" height="16.5" fill="#bcd35f"/><rect x="1002" y="1.5" width="8" height="16.5" fill="#cdde87"/><rect x="1010" y="1.5" width="8" height="16.5" fill="#dde9af"/><rect x="1018" y="1.5" width="8" height="16.5" fill="#eef4d7"/><rect x="1026" y="1.5" width="8" height="16.5" fill="#22241c"/><rect x="1034" y="1.5" width="8" height="16.5" fill="#454838"/><rect x="1042" y="1.5" width="8" height="16.5" fill="#676c54"/><rect x="1050" y="1.5" width="8" height="16.5" fill="#898f70"/><rect x="1058" y="1.5" width="8" height="16.5" fill="#a7ab93"/><rect x="1066" y="1.5" width="8" height="16.5" fill="#c4c7b7"/><rect x="1074" y="1.5" width="8" height="16.5" fill="#e2e3db"/><rect x="1082" y="1.5" width="8" height="16.5" fill="#112a00"/><rect x="1090" y="1.5" width="8" height="16.5" fill="#225500"/><rect x="1098" y="1.5" width="8" height="16.5" fill="#338000"/><rect x="1106" y="1.5" width="8" height="16.5" fill="#44aa00"/><rect x="1114" y="1.5" width="8" height="16.5" fill="#55d400"/><rect x="1122" y="1.5" width="8" height="16.5" fill="#66ff00"/><rect x="1130" y="1.5" width="8" height="16.5" fill="#80ff2b"/><rect x="1138" y="1.5" width="8" height="16.5" fill="#99ff55"/><rect x="1146" y="1.5" width="8" height="16.5" fill="#b2ff80"/><rect x="1154" y="1.5" width="8" height="16.5" fill="#ccffaa"/><rect x="1162" y="1.5" width="8" height="16.5" fill="#e5ffd4"/><rect x="1170" y="1.5" width="8" height="16.5" fill="#17280b"/><rect x="1178" y="1.5" width="8" height="16.5" fill="#2d5016"/><rect x="1186" y="1.5" width="8" height="16.5" fill="#447821"/><rect x="1194" y="1.5" width="8" height="16.5" fill="#5aa02c"/><rect x="1202" y="1.5" width="8" height="16.5" fill="#71c837"/><rect x="1210" y="1.5" width="8" height="16.5" fill="#8dd35f"/><rect x="1218" y="1.5" width="8" height="16.5" fill="#aade87"/><rect x="1226" y="1.5" width="8" height="16.5" fill="#c6e9af"/><rect x="1234" y="1.5" width="8" height="16.5" fill="#e3f4d7"/><rect x="1242" y="1.5" width="8" height="16.5" fill="#1f241c"/><rect x="1250" y="1.5" width="8" height="16.5" fill="#3e4838"/><rect x="1258" y="1.5" width="6" height="16.5" fill="#5d6c54"/></svg><svg style="left:2px;top:706px" width="8" height="17" viewBox="0 0 8 17"><path d="M0.5 0.5 L7.5 16.5 M7.5 0.5 L0.5 16.5" stroke="#a02020" stroke-width="1"/></svg><svg style="left:1252px;top:705px" width="28" height="19" viewBox="0 0 28 19"><path d="M17.5 9.5 l4 -4 l0 8Z" fill="#111"/></svg><svg style="left:0;top:726px" width="1280" height="16" viewBox="0 0 1280 16"><path d="M6 8 l3.5 -3.5 l0 7Z" fill="#888"/><path d="M1259 8 l-3.5 -3.5 l0 7Z" fill="#333"/></svg><div class="a" style="left:18px;top:727px;width:447px;height:13px;border:1px solid #9a9a9a;border-radius:2px;background:linear-gradient(#f6f6f6,#e9e9e9 50%,#dcdcdc 50%,#d0d0d0)"></div><div class="a" style="left:237px;top:730px;width:1px;height:7px;background:#444"></div><div class="a" style="left:240px;top:730px;width:1px;height:7px;background:#444"></div><div class="a" style="left:243px;top:730px;width:1px;height:7px;background:#444"></div><div class="t" style="left:2px;top:743px;font-size:12px">Füllung:</div><div class="t" style="left:2px;top:757px;font-size:12px">Kontur:</div><div class="a" style="left:49px;top:742.5px;width:73px;height:13px;background:#484848"></div><div class="t" style="left:59px;top:757.5px;font-size:11px;font-weight:bold">Ungesetzt</div><div class="t" style="left:127px;top:750px;font-size:12px;letter-spacing:-1px">O:</div><div class="a" style="left:140px;top:745px;width:36px;height:21px;background:#fff;border:1px solid #abadb3;border-top-color:#8e8f8f"></div><div class="t" style="left:144px;top:750px;font-size:12px">100</div><div class="a" style="left:178px;top:746px;width:10px;height:10px;border:1px solid #b8b8b8;border-radius:1px;background:linear-gradient(#f6f6f6,#e4e4e4)"></div><div class="a" style="left:178px;top:756px;width:10px;height:10px;border:1px solid #b8b8b8;border-radius:1px;background:linear-gradient(#f6f6f6,#e4e4e4)"></div><svg style="left:178px;top:746px" width="10" height="20" viewBox="0 0 10 20"><path d="M5 3.5 l2.6 2.6 l-5.2 0Z" fill="#9a9a9a"/><path d="M5 16.5 l2.6 -2.6 l-5.2 0Z" fill="#3a5acc"/></svg><div class="sep" style="left:189px;top:744px;height:24px;background:#c8c8c8;box-shadow:1px 0 0 #fff"></div><svg style="left:197px;top:749px" width="15" height="12" viewBox="0 0 15 12"><path d="M1 7 Q7.5 1.5 14 7 Q7.5 11.5 1 7Z" fill="#fff" stroke="#111" stroke-width="1.1"/><circle cx="7.5" cy="7" r="2.6" fill="#111"/><path d="M2.4 3.4 L3.6 4.8 M4.8 1.6 L5.6 3.4 M7.5 0.8 L7.5 2.8 M10.2 1.6 L9.4 3.4 M12.6 3.4 L11.4 4.8" stroke="#111" stroke-width="1"/></svg><svg style="left:220px;top:748px" width="12" height="14" viewBox="0 0 12 14"><path d="M3 7 L3 3.6 Q3 1 6 1 Q9 1 9 3.6 L9 4.6" fill="none" stroke="#333" stroke-width="1.3"/><rect x="1.2" y="6.2" width="9.6" height="7" rx="1" fill="#f1dc6a" stroke="#7a6a1e" stroke-width=".9"/><rect x="5.2" y="8.4" width="1.8" height="2.6" fill="#5a4a10"/></svg><div class="a" style="left:237px;top:742px;width:64px;height:27px;background:#fff;border:1px solid #abadb3;border-top-color:#8e8f8f"></div><div class="t" style="left:241px;top:751px;font-size:10px;font-weight:bold">▪Ebene 1</div><div class="a" style="left:302px;top:743px;width:16px;height:26px;border:1px solid #707070;border-radius:2px;background:linear-gradient(#f2f2f2,#ebebeb 50%,#dddddd 50%,#cfcfcf)"></div><svg style="left:302px;top:743px" width="16" height="26" viewBox="0 0 16 26"><path d="M8 15 l3.5 -3.5 l-7 0Z" fill="#000"/></svg><div class="t" style="left:325px;top:750px;font-size:12px;letter-spacing:-.113px">Ziehen, um Knoten auszuwählen. Klicken, um nur dieses Objekt zu bearbeiten.</div><div class="sep" style="left:1120px;top:742px;height:28px;background:#a0a0a0;box-shadow:1px 0 0 #fff"></div><div class="t" style="left:1124px;top:744px;font-size:11px">X:</div><div class="t" style="left:1124px;top:758px;font-size:11px">Y:</div><div class="t" style="left:1142px;top:744px;font-size:11.5px;font-family:'Liberation Mono',monospace">601,17</div><div class="t" style="left:1142px;top:758px;font-size:11.5px;font-family:'Liberation Mono',monospace">538,16</div><div class="t" style="left:1193px;top:750.5px;font-size:11px">Z:</div><div class="a" style="left:1204px;top:745px;width:45px;height:21px;background:#fff;border:1px solid #abadb3;border-top-color:#8e8f8f"></div><div class="t" style="left:1211px;top:750.5px;font-size:11px;letter-spacing:-.2px">792%</div><div class="a" style="left:1251px;top:746px;width:10px;height:10px;border:1px solid #b8b8b8;border-radius:1px;background:linear-gradient(#f6f6f6,#e4e4e4)"></div><div class="a" style="left:1251px;top:756px;width:10px;height:10px;border:1px solid #b8b8b8;border-radius:1px;background:linear-gradient(#f6f6f6,#e4e4e4)"></div><svg style="left:1251px;top:746px" width="10" height="20" viewBox="0 0 10 20"><path d="M5 3.5 l2.6 2.6 l-5.2 0Z" fill="#3a5acc"/><path d="M5 16.5 l2.6 -2.6 l-5.2 0Z" fill="#3a5acc"/></svg><svg style="left:1266px;top:756px" width="12" height="12" viewBox="0 0 12 12"><rect x="9" y="1" width="2" height="2" fill="#b8b8b8"/><rect x="9" y="5" width="2" height="2" fill="#b8b8b8"/><rect x="5" y="5" width="2" height="2" fill="#b8b8b8"/><rect x="9" y="9" width="2" height="2" fill="#b8b8b8"/><rect x="5" y="9" width="2" height="2" fill="#b8b8b8"/><rect x="1" y="9" width="2" height="2" fill="#b8b8b8"/></svg><svg width="0" height="0" style="left:0;top:0"><defs>
<linearGradient id="gpaper" x1="0" y1="0" x2="1" y2="1"><stop offset="0" stop-color="#ffffff"/><stop offset="1" stop-color="#d8d8d0"/></linearGradient>
<linearGradient id="gblue" x1="0" y1="0" x2="1" y2="1"><stop offset="0" stop-color="#eef3f8"/><stop offset="1" stop-color="#9fb7d0"/></linearGradient>
<linearGradient id="gfold" x1="0" y1="0" x2="0" y2="1"><stop offset="0" stop-color="#d6dca6"/><stop offset="1" stop-color="#a9b078"/></linearGradient>
<linearGradient id="ggreen" x1="0" y1="0" x2="1" y2="1"><stop offset="0" stop-color="#d8f0d0"/><stop offset="1" stop-color="#58a858"/></linearGradient>
<radialGradient id="gpink" cx=".4" cy=".35" r=".7"><stop offset="0" stop-color="#ffffff"/><stop offset="1" stop-color="#f4a0a8"/></radialGradient>
<linearGradient id="gyel" x1="0" y1="0" x2="1" y2="1"><stop offset="0" stop-color="#fffbd0"/><stop offset="1" stop-color="#e8d040"/></linearGradient>
<radialGradient id="glens" cx=".35" cy=".3" r=".8"><stop offset="0" stop-color="#ffffff"/><stop offset="1" stop-color="#b8d0e8"/></radialGradient>
</defs></svg><div class="sep" style="left:111px;top:48px;height:17px"></div><div class="sep" style="left:176px;top:48px;height:17px"></div><div class="sep" style="left:240px;top:48px;height:17px"></div><div class="sep" style="left:330px;top:48px;height:17px"></div><div class="sep" style="left:420px;top:48px;height:17px"></div><div class="sep" style="left:510px;top:48px;height:17px"></div><div class="sep" style="left:574px;top:48px;height:17px"></div><div class="sep" style="left:716px;top:48px;height:17px"></div><svg style="left:6px;top:47px" width="18" height="18" viewBox="0 0 18 18"><path d="M3.5 1.5 L10.5 1.5 L14.5 5.5 L14.5 16.5 L3.5 16.5Z" fill="url(#gpaper)" stroke="#9a9a92" stroke-width="1"/><path d="M10.5 1.5 L10.5 5.5 L14.5 5.5" fill="#f4f4f0" stroke="#9a9a92" stroke-width="1"/></svg><svg style="left:32px;top:47px" width="18" height="18" viewBox="0 0 18 18"><path d="M2.5 4.5 Q2.5 2.5 4.5 2.5 L7.5 2.5 L9 4.5 L14.5 4.5 Q15.5 4.5 15.5 6 L15.5 14.5 L2.5 14.5Z" fill="#b8be88" stroke="#8a9060" stroke-width="1"/><path d="M2.5 14.5 L3.5 8.5 L16.5 8.5 L15.5 14.5Z" fill="url(#gfold)" stroke="#8a9060" stroke-width="1"/><rect x="4" y="6" width="10" height="2" fill="#e8ecc8"/></svg><svg style="left:58px;top:47px" width="18" height="18" viewBox="0 0 18 18"><rect x="1.5" y="1.5" width="15" height="15" rx="1.5" fill="#4a7ac8" stroke="#2a4a90" stroke-width="1"/><rect x="3.5" y="1.5" width="11" height="8" fill="#fafafa"/><rect x="3.5" y="1.5" width="11" height="3" fill="#e02828"/><rect x="5" y="11" width="8" height="5.5" fill="#d0d4dc" stroke="#2a3a60" stroke-width=".8"/><rect x="6.2" y="12.2" width="2.4" height="3.4" fill="#3a5088"/></svg><svg style="left:84px;top:47px" width="18" height="18" viewBox="0 0 18 18"><rect x="5" y="1.5" width="8" height="7" fill="#fafafa" stroke="#8a8a84" stroke-width="1"/><path d="M1.5 9.5 Q1.5 7.5 3.5 7.5 L14.5 7.5 Q16.5 7.5 16.5 9.5 L16.5 15.5 L1.5 15.5Z" fill="#d8d8d2" stroke="#7a7a74" stroke-width="1"/><rect x="3.5" y="11.5" width="11" height="2.5" fill="#fafaf6" stroke="#8a8a84" stroke-width=".8"/><path d="M6.5 3.5 h5 M6.5 5.5 h5" stroke="#b0b0b0" stroke-width=".8"/></svg><svg style="left:122px;top:47px" width="18" height="18" viewBox="0 0 18 18"><path d="M6.5 1.5 L12.5 1.5 L16.5 5.5 L16.5 16.5 L6.5 16.5Z" fill="url(#gpaper)" stroke="#111" stroke-width="1.2"/><path d="M12.5 1.5 L12.5 5.5 L16.5 5.5" fill="none" stroke="#111" stroke-width="1.2"/><path d="M0.5 9 L9 9" stroke="#000" stroke-width="1.6"/><path d="M11.5 9 L7.5 5.8 L7.5 12.2Z" fill="#000"/></svg><svg style="left:148px;top:47px" width="18" height="18" viewBox="0 0 18 18"><path d="M2.5 1.5 L8.5 1.5 L12.5 5.5 L12.5 16.5 L2.5 16.5Z" fill="url(#gpaper)" stroke="#111" stroke-width="1.2"/><path d="M8.5 1.5 L8.5 5.5 L12.5 5.5" fill="none" stroke="#111" stroke-width="1.2"/><path d="M7 9.5 L14 9.5" stroke="#000" stroke-width="1.6"/><path d="M17.5 9.5 L13.5 6.3 L13.5 12.7Z" fill="#000"/></svg><svg style="left:186px;top:47px" width="18" height="18" viewBox="0 0 18 18"><path d="M3.5 1.5 L10.5 1.5 L14.5 5.5 L14.5 16.5 L3.5 16.5Z" fill="url(#gpaper)" stroke="#8a8a84" stroke-width="1"/><path d="M10.5 1.5 L10.5 5.5 L14.5 5.5" fill="#f4f4f0" stroke="#8a8a84" stroke-width="1"/><path d="M6.4 7.6 L11.6 13 M11.6 7.6 L6.4 13" stroke="#e81828" stroke-width="1.15"/></svg><svg style="left:212px;top:47px" width="18" height="18" viewBox="0 0 18 18"><path d="M3.5 1.5 L10.5 1.5 L14.5 5.5 L14.5 16.5 L3.5 16.5Z" fill="#c9c9c9" stroke="#555" stroke-width="1" stroke-dasharray="1 1"/><path d="M6.5 7.5 L11.5 13 M11.5 7.5 L6.5 13" stroke="#c06868" stroke-width="1"/></svg><svg style="left:250px;top:47px" width="18" height="18" viewBox="0 0 18 18"><path d="M1.5 1.5 L10.5 1.5 L10.5 11.5 L1.5 11.5Z" fill="#f2f2f0" stroke="#b4b4b4" stroke-width="1"/><path d="M5.5 5.5 L15.5 5.5 L15.5 13.5 L12.5 16.5 L5.5 16.5Z" fill="#f8f8f6" stroke="#a0a0a0" stroke-width="1"/><path d="M7.5 8 h6 M7.5 10 h6 M7.5 12 h4" stroke="#b8b8b8" stroke-width=".9"/></svg><svg style="left:276px;top:47px" width="18" height="18" viewBox="0 0 18 18"><path d="M3.4 1 L6.6 1.6 L10.6 11 L8.4 11.4Z M14.6 1 L11.4 1.6 L7.4 11 L9.6 11.4Z" fill="#c8c8c4" stroke="#8e8e8a" stroke-width=".7"/><rect x="2" y="10.5" width="6" height="6" rx="1.5" fill="#d89a38" stroke="#8a5a10" stroke-width="1"/><rect x="10" y="10.5" width="6" height="6" rx="1.5" fill="#d89a38" stroke="#8a5a10" stroke-width="1"/><circle cx="5" cy="13.5" r="1.2" fill="#f4e0b0"/><circle cx="13" cy="13.5" r="1.2" fill="#f4e0b0"/></svg><svg style="left:302px;top:47px" width="18" height="18" viewBox="0 0 18 18"><rect x="2.5" y="2.5" width="13" height="14" rx="1.2" fill="#c88a30" stroke="#7a4a08" stroke-width="1.2"/><rect x="6" y="1" width="6" height="3" rx="1" fill="#8a8a8a" stroke="#555" stroke-width=".8"/><path d="M5 5 L13 5 L13 12.5 L10.5 15 L5 15Z" fill="#fafaf8" stroke="#9a9a9a" stroke-width=".8"/><path d="M6.5 7.5 h5 M6.5 9.5 h5 M6.5 11.5 h3" stroke="#b0b0b0" stroke-width=".8"/></svg><svg style="left:340px;top:47px" width="18" height="18" viewBox="0 0 18 18"><circle cx="8.5" cy="8.2" r="7" fill="url(#glens)" stroke="#222" stroke-width="1.5"/><rect x="4" y="4.5" width="9" height="7" fill="#fff" stroke="#111" stroke-width="1" stroke-dasharray="1 1"/><path d="M13.8 13.6 L15.4 15.2" stroke="#111" stroke-width="2.6" stroke-linecap="round"/></svg><svg style="left:366px;top:47px" width="18" height="18" viewBox="0 0 18 18"><circle cx="8.5" cy="8.2" r="7" fill="url(#glens)" stroke="#222" stroke-width="1.5"/><rect x="4" y="4" width="5" height="5" fill="#f0d060" stroke="#6a5a10" stroke-width=".9"/><rect x="7" y="7" width="5" height="5" fill="#f0d060" stroke="#6a5a10" stroke-width=".9"/><path d="M13.8 13.6 L15.4 15.2" stroke="#111" stroke-width="2.6" stroke-linecap="round"/></svg><svg style="left:392px;top:47px" width="18" height="18" viewBox="0 0 18 18"><circle cx="8.5" cy="8.2" r="7" fill="url(#glens)" stroke="#222" stroke-width="1.5"/><rect x="5" y="3.8" width="7" height="9" fill="#e8e8e8" stroke="#444" stroke-width="1"/><path d="M13.8 13.6 L15.4 15.2" stroke="#111" stroke-width="2.6" stroke-linecap="round"/></svg><svg style="left:430px;top:47px" width="18" height="18" viewBox="0 0 18 18"><rect x="2.5" y="2.5" width="10" height="10" fill="#dfe6ee" stroke="#223" stroke-width="1.2"/><rect x="5.5" y="5.5" width="11" height="11" fill="url(#gblue)" stroke="#112" stroke-width="1.3"/></svg><svg style="left:456px;top:47px" width="18" height="18" viewBox="0 0 18 18"><rect x="2.5" y="2.5" width="9" height="9" fill="#dfe6ee" stroke="#223" stroke-width="1.2"/><rect x="5.5" y="5.5" width="11" height="11" fill="#f4f6f8" stroke="#112" stroke-width="1.3"/><path d="M9 10 L9 8 Q9 6.4 11 6.4 Q13 6.4 13 8 L13 10" fill="none" stroke="#222" stroke-width="1.1"/><rect x="8" y="9.6" width="6" height="4.6" fill="#f0c030" stroke="#222" stroke-width=".9"/></svg><svg style="left:482px;top:47px" width="18" height="18" viewBox="0 0 18 18"><rect x="2.5" y="2.5" width="9" height="9" fill="#dfe6ee" stroke="#223" stroke-width="1.2"/><rect x="5.5" y="5.5" width="11" height="11" fill="#f4f6f8" stroke="#112" stroke-width="1.3"/><path d="M9 10 L9 8 Q9 6.4 11 6.4 Q13 6.4 13 8 L13 10" fill="none" stroke="#222" stroke-width="1.1"/><rect x="8" y="9.6" width="6" height="4.6" fill="#58b048" stroke="#222" stroke-width=".9"/></svg><svg style="left:520px;top:47px" width="18" height="18" viewBox="0 0 18 18"><rect x="1" y="1" width="2" height="2" fill="#000"/><rect x="15" y="1" width="2" height="2" fill="#000"/><rect x="1" y="15" width="2" height="2" fill="#000"/><rect x="15" y="15" width="2" height="2" fill="#000"/><rect x="2" y="2" width="14" height="14" fill="none" stroke="#555" stroke-width=".7" stroke-dasharray="1.2 1.2"/><rect x="3.5" y="8" width="8" height="6.5" fill="#c8d4e0" stroke="#334" stroke-width="1"/><circle cx="11" cy="7" r="4" fill="#d8e4f0" stroke="#445" stroke-width="1"/></svg><svg style="left:546px;top:47px" width="18" height="18" viewBox="0 0 18 18"><rect x="1" y="1" width="2" height="2" fill="#000"/><rect x="15" y="1" width="2" height="2" fill="#000"/><rect x="1" y="15" width="2" height="2" fill="#000"/><rect x="15" y="15" width="2" height="2" fill="#000"/><rect x="2" y="2" width="14" height="14" fill="none" stroke="#555" stroke-width=".7" stroke-dasharray="1.2 1.2"/><circle cx="11" cy="6.5" r="4" fill="#d8e4f0" stroke="#445" stroke-width="1"/><rect x="3.5" y="8.5" width="8" height="6" fill="#f0c030" stroke="#665010" stroke-width="1"/></svg><svg style="left:584px;top:47px" width="18" height="18" viewBox="0 0 18 18"><path d="M2 3 L13 3 L6 16 L2 16Z" fill="#fafafa" stroke="#111" stroke-width="1.2"/><path d="M15.5 1.5 L17 4 L7.5 13 L3 16 L5.5 11Z" fill="#222" stroke="#000" stroke-width=".8"/><path d="M14 3 L16.5 4.6 L15 6 L12.6 4.4Z" fill="#f0c030"/></svg><div class="t" style="left:608px;top:44px;font-size:25px;font-weight:bold;font-family:'Liberation Serif',serif;color:#000;transform:scaleX(1.18);transform-origin:0 0;text-shadow:0.4px 0 0 #000">T</div><svg style="left:636px;top:47px" width="18" height="18" viewBox="0 0 18 18"><g fill="#e4e4e4" stroke="#555" stroke-width="1"><path d="M2 12 L11 12 L16 15 L7 15Z"/><path d="M2 9 L11 9 L16 12 L7 12Z"/><path d="M2 6 L11 6 L16 9 L7 9Z"/></g></svg><svg style="left:662px;top:47px" width="18" height="18" viewBox="0 0 18 18"><rect x="1.5" y="2.5" width="15" height="14" fill="#f4f4f0" stroke="#111" stroke-width="1.3"/><rect x="2.5" y="3.5" width="13" height="2.4" fill="#9ab8dc"/><path d="M7 8.5 L4.5 11 L7 13.5 M11 8.5 L13.5 11 L11 13.5" fill="none" stroke="#222" stroke-width="1.1"/></svg><svg style="left:688px;top:47px" width="18" height="18" viewBox="0 0 18 18"><rect x="2" y="1" width="1.4" height="16" fill="#d81828"/><rect x="4.5" y="2.5" width="6" height="3" fill="#b8d0e8" stroke="#456" stroke-width=".9"/><rect x="4.5" y="7.5" width="12" height="3" fill="#b8d0e8" stroke="#456" stroke-width=".9"/><rect x="4.5" y="12.5" width="9" height="3" fill="#b8d0e8" stroke="#456" stroke-width=".9"/></svg><svg style="left:726px;top:47px" width="18" height="18" viewBox="0 0 18 18"><path d="M3.5 1.5 L10.5 1.5 L14.5 5.5 L14.5 16.5 L3.5 16.5Z" fill="url(#gpaper)" stroke="#9a9a92" stroke-width="1"/><path d="M10.5 1.5 L10.5 5.5 L14.5 5.5" fill="#f4f4f0" stroke="#9a9a92" stroke-width="1"/><path d="M5.5 3 L5.5 7 Q5.5 9 7.5 9.6 L7.5 15 L10.5 15 L10.5 9.6 Q12.5 9 12.5 7 L12.5 3 L10.6 3 L10.6 6.4 L7.4 6.4 L7.4 3Z" fill="#c8ccd0" stroke="#555" stroke-width=".9"/><rect x="7.6" y="13" width="2.8" height="3" fill="#3058b8"/></svg><svg style="left:752px;top:47px" width="18" height="18" viewBox="0 0 18 18"><path d="M3.5 1.5 L10.5 1.5 L14.5 5.5 L14.5 16.5 L3.5 16.5Z" fill="url(#gpaper)" stroke="#a8a8a0" stroke-width="1"/><path d="M10.5 1.5 L10.5 5.5 L14.5 5.5" fill="#f4f4f0" stroke="#a8a8a0" stroke-width="1"/><path d="M6 7 L12 13.5 M12 7 L6 13.5" stroke="#e81828" stroke-width="1.3"/></svg><div class="sep" style="left:84px;top:78px;height:18px"></div><div class="sep" style="left:148px;top:78px;height:18px"></div><div class="sep" style="left:212px;top:78px;height:18px"></div><div class="sep" style="left:328px;top:78px;height:18px"></div><div class="sep" style="left:392px;top:78px;height:18px"></div><div class="sep" style="left:456px;top:78px;height:18px"></div><div class="sep" style="left:666px;top:78px;height:18px"></div><div class="sep" style="left:757px;top:78px;height:18px"></div><svg style="left:6px;top:78px" width="18" height="18" viewBox="0 0 18 18"><path d="M5 4 h8 M9 0.5 v7.5" stroke="#000" stroke-width="2"/><path d="M1 13.5 h16" stroke="#222" stroke-width="1"/><rect x="6.75" y="11.25" width="4.5" height="4.5" fill="#9a9af4" stroke="#0000ee" stroke-width="1.3"/></svg><svg style="left:30px;top:78px" width="18" height="18" viewBox="0 0 18 18"><path d="M9 12 l4 -4 l-8 0Z" fill="#000"/></svg><svg style="left:56px;top:78px" width="18" height="18" viewBox="0 0 18 18"><path d="M5.5 4.5 h7.5" stroke="#000" stroke-width="2.2"/><path d="M1 13.5 h16" stroke="#666" stroke-width="1"/><rect x="6.75" y="11.25" width="4.5" height="4.5" fill="#b0b0f0" stroke="#8080e8" stroke-width="1.3"/></svg><svg style="left:94px;top:78px" width="18" height="18" viewBox="0 0 18 18"><rect x="3.3" y="1.8" width="3.4" height="3.4" fill="#c0c0f8" stroke="#6060f0" stroke-width="1.3"/><rect x="11.3" y="1.8" width="3.4" height="3.4" fill="#c0c0f8" stroke="#6060f0" stroke-width="1.3"/><path d="M1.5 3.5 h2 M14.6 3.5 h2" stroke="#6060f0" stroke-width="1"/><path d="M9 6 V9" stroke="#000" stroke-width="1.4"/><path d="M9 11 l3 -3 h-6Z" fill="#000"/><path d="M1.5 14.5 h15" stroke="#222" stroke-width="1"/><rect x="7.1" y="12.6" width="3.8" height="3.8" fill="#9a9af4" stroke="#0000ee" stroke-width="1.3"/></svg><svg style="left:120px;top:78px" width="18" height="18" viewBox="0 0 18 18"><path d="M1.5 3.5 h15" stroke="#666" stroke-width="1"/><rect x="7.2" y="1.7" width="3.6" height="3.6" fill="#c0c0f8" stroke="#6060f0" stroke-width="1.3"/><path d="M9 6 V9" stroke="#000" stroke-width="1.4"/><path d="M9 11 l3 -3 h-6Z" fill="#000"/><rect x="3.2" y="12.7" width="3.6" height="3.6" fill="#9a9af4" stroke="#0000ee" stroke-width="1.3"/><rect x="11.2" y="12.7" width="3.6" height="3.6" fill="#9a9af4" stroke="#0000ee" stroke-width="1.3"/><path d="M1.5 14.5 h1.6 M14.8 14.5 h1.6" stroke="#0000ee" stroke-width="1.2"/></svg><svg style="left:158px;top:78px" width="18" height="18" viewBox="0 0 18 18"><rect x="3.3" y="1.8" width="3.4" height="3.4" fill="#c0c0f8" stroke="#6060f0" stroke-width="1.3"/><rect x="11.3" y="1.8" width="3.4" height="3.4" fill="#c0c0f8" stroke="#6060f0" stroke-width="1.3"/><path d="M1.5 3.5 h2 M14.6 3.5 h2" stroke="#6060f0" stroke-width="1"/><path d="M9 6 V9" stroke="#000" stroke-width="1.4"/><path d="M9 11 l3 -3 h-6Z" fill="#000"/><path d="M1.5 14.5 h15" stroke="#222" stroke-width="1"/><rect x="3.2" y="12.7" width="3.6" height="3.6" fill="#9a9af4" stroke="#0000ee" stroke-width="1.3"/><rect x="11.2" y="12.7" width="3.6" height="3.6" fill="#9a9af4" stroke="#0000ee" stroke-width="1.3"/></svg><svg style="left:184px;top:78px" width="18" height="18" viewBox="0 0 18 18"><path d="M1.5 3.5 h15" stroke="#444" stroke-width="1"/><rect x="3.3" y="1.8" width="3.4" height="3.4" fill="#c0c0f8" stroke="#6060f0" stroke-width="1.3"/><rect x="11.3" y="1.8" width="3.4" height="3.4" fill="#c0c0f8" stroke="#6060f0" stroke-width="1.3"/><path d="M9 6 V9" stroke="#000" stroke-width="1.4"/><path d="M9 11 l3 -3 h-6Z" fill="#000"/><rect x="3.2" y="12.7" width="3.6" height="3.6" fill="#9a9af4" stroke="#0000ee" stroke-width="1.3"/><rect x="11.2" y="12.7" width="3.6" height="3.6" fill="#9a9af4" stroke="#0000ee" stroke-width="1.3"/><path d="M1.5 14.5 h1.6 M14.8 14.5 h1.6" stroke="#0000ee" stroke-width="1.2"/></svg><svg style="left:222px;top:78px" width="18" height="18" viewBox="0 0 18 18"><path d="M2 1.5 Q7 3 9 12 Q10 4 15.5 1.5" fill="none" stroke="#444" stroke-width="1.1"/><path d="M9 9.5 l3 3 l-3 3 l-3 -3Z" fill="#8080f0" stroke="#0000ee" stroke-width="1.2"/></svg><svg style="left:248px;top:78px" width="18" height="18" viewBox="0 0 18 18"><path d="M2 2 Q2.5 11.5 9 11.5 Q15.5 11.5 16 2" fill="none" stroke="#444" stroke-width="1.1"/><rect x="6.9" y="9.4" width="4.2" height="4.2" fill="#c8c8fc" stroke="#0000ee" stroke-width="1.3"/></svg><svg style="left:274px;top:78px" width="18" height="18" viewBox="0 0 18 18"><path d="M2 2 Q2.5 11.5 9 11.5 Q15.5 11.5 16 2" fill="none" stroke="#444" stroke-width="1.1"/><path d="M2 12 h14" stroke="#444" stroke-width="1"/><rect x="6.5" y="9.5" width="5" height="5" fill="#9a9af4" stroke="#0000ee" stroke-width="1.3"/><circle cx="2.5" cy="12" r="1.3" fill="#8080f0" stroke="#0000ee" stroke-width="1"/><circle cx="15.5" cy="12" r="1.3" fill="#8080f0" stroke="#0000ee" stroke-width="1"/></svg><svg style="left:300px;top:78px" width="18" height="18" viewBox="0 0 18 18"><path d="M2 2 Q2.5 11.5 9 11.5 Q15.5 11.5 16 2" fill="none" stroke="#444" stroke-width="1.1"/><circle cx="9" cy="11.5" r="2.6" fill="#7070d8" stroke="#0000ee" stroke-width="1.2"/></svg><svg style="left:338px;top:78px" width="18" height="18" viewBox="0 0 18 18"><path d="M4 14 L14 4" stroke="#444" stroke-width="1.2"/><rect x="2" y="12" width="4" height="4" fill="#c8c8fc" stroke="#0000ee" stroke-width="1.3"/><rect x="12" y="2" width="4" height="4" fill="#c8c8fc" stroke="#0000ee" stroke-width="1.3"/></svg><svg style="left:364px;top:78px" width="18" height="18" viewBox="0 0 18 18"><path d="M4 14 Q5 5 14 4" fill="none" stroke="#444" stroke-width="1.2"/><rect x="2" y="12" width="4" height="4" fill="#c8c8fc" stroke="#0000ee" stroke-width="1.3"/><rect x="12" y="2" width="4" height="4" fill="#c8c8fc" stroke="#0000ee" stroke-width="1.3"/></svg><svg style="left:402px;top:78px" width="18" height="18" viewBox="0 0 18 18"><path d="M3 7 L3 3.5 L7 3.5 Q9 3.5 9 7 Q9 14 12 14 L14 14" fill="none" stroke="#555" stroke-width="1.6"/><rect x="5.5" y="2" width="3" height="3" fill="#8080f0" stroke="#0000ee" stroke-width="1.3"/><rect x="1.7" y="7.5" width="3" height="3" fill="#8080f0" stroke="#0000ee" stroke-width="1.3"/><rect x="11.5" y="12" width="3" height="3" fill="#8080f0" stroke="#0000ee" stroke-width="1.3"/></svg><svg style="left:428px;top:78px" width="18" height="18" viewBox="0 0 18 18"><path d="M6 15 L6 9 Q6 5 11 5 L16 5 M8 9 L14 9" fill="none" stroke="#8898a8" stroke-width="2"/><rect x="7.5" y="2" width="3" height="3" fill="#8080f0" stroke="#0000ee" stroke-width="1.3"/><rect x="3.5" y="6.5" width="3" height="3" fill="#8080f0" stroke="#0000ee" stroke-width="1.3"/><rect x="10.5" y="6" width="3" height="3" fill="#8080f0" stroke="#0000ee" stroke-width="1.3"/><rect x="5.5" y="10.5" width="3" height="3" fill="#8080f0" stroke="#0000ee" stroke-width="1.3"/></svg><div class="t" style="left:471px;top:82px;font-size:10.5px;color:#8c8c9c">X:</div><div class="a" style="left:485px;top:76px;width:45px;height:21px;background:#ececec;border:1px solid #b4b4b4;border-top-color:#a0a0a0"></div><div class="t" style="left:489px;top:81px;font-size:12px;color:#9a9488">0,000</div><div class="a" style="left:530px;top:77px;width:10px;height:10px;border:1px solid #b8b8b8;border-radius:1px;background:linear-gradient(#f6f6f6,#e4e4e4)"></div><div class="a" style="left:530px;top:87px;width:10px;height:10px;border:1px solid #b8b8b8;border-radius:1px;background:linear-gradient(#f6f6f6,#e4e4e4)"></div><svg style="left:530px;top:77px" width="10" height="20" viewBox="0 0 10 20"><path d="M5 3.5 l2.6 2.6 l-5.2 0Z" fill="#9a9a9a"/><path d="M5 16.5 l2.6 -2.6 l-5.2 0Z" fill="#9a9a9a"/></svg><div class="t" style="left:549px;top:82px;font-size:10.5px;color:#8c8c9c">Y:</div><div class="a" style="left:562px;top:76px;width:45px;height:21px;background:#ececec;border:1px solid #b4b4b4;border-top-color:#a0a0a0"></div><div class="t" style="left:566px;top:81px;font-size:12px;color:#9a9488">0,000</div><div class="a" style="left:607px;top:77px;width:10px;height:10px;border:1px solid #b8b8b8;border-radius:1px;background:linear-gradient(#f6f6f6,#e4e4e4)"></div><div class="a" style="left:607px;top:87px;width:10px;height:10px;border:1px solid #b8b8b8;border-radius:1px;background:linear-gradient(#f6f6f6,#e4e4e4)"></div><svg style="left:607px;top:77px" width="10" height="20" viewBox="0 0 10 20"><path d="M5 3.5 l2.6 2.6 l-5.2 0Z" fill="#9a9a9a"/><path d="M5 16.5 l2.6 -2.6 l-5.2 0Z" fill="#9a9a9a"/></svg><div class="a" style="left:618px;top:77px;width:26px;height:20px;background:#fff;border:1px solid #abadb3"></div><div class="t" style="left:622px;top:81px;font-size:12px">px</div><div class="a" style="left:643px;top:77px;width:17px;height:20px;border:1px solid #606060;border-radius:2px;background:linear-gradient(#f2f2f2,#ebebeb 50%,#dddddd 50%,#cfcfcf)"></div><svg style="left:643px;top:77px" width="17" height="20" viewBox="0 0 17 20"><path d="M8.5 12.5 l3.5 -3.5 l-7 0Z" fill="#000"/></svg><div class="pressed" style="left:699px;top:74px;width:26px;height:26px"></div><div class="pressed" style="left:789px;top:74px;width:26px;height:26px"></div><svg style="left:676px;top:78px" width="18" height="18" viewBox="0 0 18 18"><path d="M3 15 Q4 5 15 3" fill="none" stroke="#20c020" stroke-width="1.5"/><path d="M8 8 Q12 8 15 9.5 M8 8 Q10 11 10.5 14.5" fill="none" stroke="#222" stroke-width="1.2"/><circle cx="3" cy="15" r="1.6" fill="#c8c8fc" stroke="#0000ee" stroke-width="1.2"/><circle cx="15" cy="3" r="1.6" fill="#c8c8fc" stroke="#0000ee" stroke-width="1.2"/></svg><svg style="left:702px;top:78px" width="18" height="18" viewBox="0 0 18 18"><path d="M3 15 Q4 5 15 3" fill="none" stroke="#2030e0" stroke-width="1.5"/><path d="M8 8 Q12 8 15 9.5 M8 8 Q10 11 10.5 14.5" fill="none" stroke="#444" stroke-width="1.2"/><circle cx="3" cy="15" r="1.6" fill="#c8c8fc" stroke="#0000ee" stroke-width="1.2"/><circle cx="15" cy="3" r="1.6" fill="#c8c8fc" stroke="#0000ee" stroke-width="1.2"/></svg><svg style="left:730px;top:78px" width="18" height="18" viewBox="0 0 18 18"><path d="M3 14 L5 8 L8 10 L10 5 L13 7 L14 3" fill="none" stroke="#889a58" stroke-width="2" stroke-dasharray="1 1"/><path d="M3 14 L9 8" stroke="#555" stroke-width="1" stroke-dasharray="1 1"/><path d="M10 9 L15 12.5 L10 16Z" fill="#e8c860" stroke="#444" stroke-width=".8" stroke-dasharray="1 1"/><rect x="15" y="9" width="1.4" height="7" fill="#333"/><path d="M3 13.5 l1.6 1.6 l-1.6 1.6 l-1.6 -1.6Z M14.5 1.5 l1.6 1.6 l-1.6 1.6 l-1.6 -1.6Z" fill="#c8c8fc" stroke="#0000ee" stroke-width=".9"/></svg><svg style="left:766px;top:78px" width="18" height="18" viewBox="0 0 18 18"><g transform="translate(9 9) scale(1 1)"><path d="M1.6 1.6 L6 6" stroke="#000" stroke-width="2.8"/><path d="M8.8 8.8 L8.8 2.6 L2.6 8.8Z" fill="#000"/></g><g transform="translate(9 9) scale(-1 1)"><path d="M1.6 1.6 L6 6" stroke="#000" stroke-width="2.8"/><path d="M8.8 8.8 L8.8 2.6 L2.6 8.8Z" fill="#000"/></g><g transform="translate(9 9) scale(1 -1)"><path d="M1.6 1.6 L6 6" stroke="#000" stroke-width="2.8"/><path d="M8.8 8.8 L8.8 2.6 L2.6 8.8Z" fill="#000"/></g><g transform="translate(9 9) scale(-1 -1)"><path d="M1.6 1.6 L6 6" stroke="#000" stroke-width="2.8"/><path d="M8.8 8.8 L8.8 2.6 L2.6 8.8Z" fill="#000"/></g></svg><svg style="left:792px;top:78px" width="18" height="18" viewBox="0 0 18 18"><path d="M5 13 Q6 4 16 3" fill="none" stroke="#999" stroke-width="1.3"/><path d="M5 4 V12" stroke="#0000ee" stroke-width="1.2"/><circle cx="5" cy="3.2" r="1.7" fill="#c8c8fc" stroke="#0000ee" stroke-width="1.2"/><rect x="2.5" y="11" width="5" height="5" fill="#5050f0" stroke="#0000ee" stroke-width="1.4"/></svg><svg style="left:819px;top:78px" width="18" height="18" viewBox="0 0 18 18"><path d="M4 14 Q3 5 14 3 Q15 13 4 14" fill="none" stroke="#f02020" stroke-width="1.6"/><rect x="2" y="12" width="4" height="4" fill="#e0e0fc" stroke="#0000ee" stroke-width="1.3"/><rect x="12" y="1.5" width="4" height="4" fill="#e0e0fc" stroke="#0000ee" stroke-width="1.3"/></svg><svg style="left:1.5px;top:105px" width="30" height="30" viewBox="0 0 30 30"><path d="M9 4.5 L9 21.5 L13 17.8 L16 24.5 L19 23.2 L16 16.6 L21.5 16.4Z" fill="#000"/></svg><div class="pressed" style="left:2.5px;top:136.5px;width:28.5px;height:27px"></div><svg style="left:1.5px;top:135px" width="30" height="30" viewBox="0 0 30 30"><path d="M5 20 Q5 8 9 7 Q14 4.5 21 5" fill="none" stroke="#555" stroke-width="1"/><path d="M10 9 L25 19.5 L19.5 20.5 L17 25.5Z" fill="#000"/><rect x="7" y="5.5" width="5" height="5" fill="#8c8cf6" stroke="#0000ee" stroke-width="1.5"/><rect x="19.8" y="3.3" width="3.4" height="3.4" fill="#b8b8f8" stroke="#5050f0" stroke-width="1"/><rect x="3.3" y="19.8" width="3.4" height="3.4" fill="#b8b8f8" stroke="#5050f0" stroke-width="1"/></svg><svg style="left:1.5px;top:165px" width="30" height="30" viewBox="0 0 30 30"><defs><linearGradient id="gw" x1="0" y1="0" x2="0" y2="1"><stop offset="0" stop-color="#707070"/><stop offset="1" stop-color="#dcdcdc"/></linearGradient></defs><path d="M4.9 16.7 L8.5 16.6 Q12 15.5 13.2 10.5 Q14.6 5 18.6 5 Q22.6 5.2 22.8 8.6 Q22.6 11 20.4 10.6 Q21 8.2 19 8 Q17 8.6 17.2 11.6 Q17.6 15.8 21.5 16.6 L25.9 16.7 L25.9 25 L4.9 25Z" fill="url(#gw)"/><path d="M4.9 16.7 L8.5 16.6 Q12 15.5 13.2 10.5 Q14.6 5 18.6 5 Q22.6 5.2 22.8 8.6 Q22.6 11 20.4 10.6 Q21 8.2 19 8 Q17 8.6 17.2 11.6 Q17.6 15.8 21.5 16.6 L25.9 16.7" fill="none" stroke="#2a2a2a" stroke-width="1.5"/></svg><svg style="left:1.5px;top:195px" width="30" height="30" viewBox="0 0 30 30"><circle cx="11.2" cy="11" r="7.3" fill="url(#glens)" stroke="#222" stroke-width="1.7"/><path d="M16.6 16.4 L18.8 18.4" stroke="#444" stroke-width="3.2"/><path d="M19 18.4 L24.6 23.2" stroke="#8a5a00" stroke-width="5.4" stroke-linecap="round"/><path d="M19 18.4 L24.6 23.2" stroke="#f4a818" stroke-width="3.8" stroke-linecap="round"/></svg><svg style="left:1.5px;top:225px" width="30" height="30" viewBox="0 0 30 30"><defs><linearGradient id="gms" x1="0" y1="0" x2="1" y2="1"><stop offset="0" stop-color="#fde0d4"/><stop offset="1" stop-color="#f0a890"/></linearGradient></defs><path d="M4.2 9.6 L13.8 3.9 L22.7 19.8 L13.1 26.2Z" fill="url(#gms)" stroke="#222" stroke-width="1.4" stroke-linejoin="round"/><path d="M5.8 12.4 l2.6 -1.5 M7.4 15.3 l4 -2.3 M9 18.1 l2.6 -1.5 M10.6 21 l4 -2.3 M12.2 23.8 l2.6 -1.5" stroke="#222" stroke-width="1.1"/></svg><svg style="left:1.5px;top:255px" width="30" height="30" viewBox="0 0 30 30"><rect x="6" y="5.2" width="19" height="18.6" fill="url(#gblue)" stroke="#111" stroke-width="1.4"/></svg><svg style="left:1.5px;top:285px" width="30" height="30" viewBox="0 0 30 30"><defs><linearGradient id="gbx" x1="0" y1="0" x2="1" y2="0"><stop offset="0" stop-color="#6868a8"/><stop offset="1" stop-color="#b4b4e4"/></linearGradient></defs><path d="M17.6 2.7 L6.1 8.5 L6.1 20.6 L17.6 16.1Z" fill="url(#gbx)"/><path d="M17.6 2.7 L25.9 10.4 L25.3 21.8 L17.6 16.1Z" fill="#ececfb"/><path d="M6.1 20.6 L17.6 16.1 L25.3 21.8 L15.1 26.3Z" fill="#343488"/><path d="M17.6 2.7 L25.9 10.4 L25.3 21.8 L15.1 26.3 L6.1 20.6 L6.1 8.5Z" fill="none" stroke="#333" stroke-width="1.2" stroke-linejoin="round"/></svg><svg style="left:1.5px;top:315px" width="30" height="30" viewBox="0 0 30 30"><defs><linearGradient id="gpk" x1="0.2" y1="0" x2="0.7" y2="1"><stop offset="0" stop-color="#fff4f4"/><stop offset="1" stop-color="#f8a4ac"/></linearGradient></defs><circle cx="15.7" cy="14.8" r="9.4" fill="url(#gpk)" stroke="#111" stroke-width="1.5"/></svg><svg style="left:1.5px;top:345px" width="30" height="30" viewBox="0 0 30 30"><path d="M10.6 5.2 L18 10.5 L16 19.6 L6.8 19.2 L4.2 10.9Z" fill="url(#gyel)" stroke="#333" stroke-width="1.1" stroke-linejoin="round"/><path d="M18.2 9.6 L20.2 14.6 L26.5 16.6 L21.6 19.4 L22.7 24.9 L17.4 22.2 L11.9 23 L14.4 18.6 L10.6 14.1 L16.4 14.4Z" fill="#fff7a4" stroke="#333" stroke-width="1.1" stroke-linejoin="round"/></svg><svg style="left:1.5px;top:375px" width="30" height="30" viewBox="0 0 30 30"><path d="M15.5 16 Q17 14 15 13 Q11.5 12.5 11.5 16.5 Q12 21 17 20.5 Q22 19 21.5 14 Q20 7.5 13.5 8 Q6.5 9.5 6.5 17 Q7.5 25 16 25.5" fill="none" stroke="#111" stroke-width="1.5"/></svg><svg style="left:1.5px;top:405px" width="30" height="30" viewBox="0 0 30 30"><defs><linearGradient id="gpn" x1="0" y1="0" x2="1" y2="1"><stop offset="0" stop-color="#ffe060"/><stop offset="1" stop-color="#f08a10"/></linearGradient></defs><path d="M5.5 6 L10 5.3 L6.2 14 L11.3 15.3 Q11.3 21 12.5 23.2 Q15 26.8 19.5 25 Q23.4 23.4 24.8 20.3" fill="none" stroke="#222" stroke-width="1.2"/><path d="M19.5 3.3 Q24 4.5 25.9 9 L22.7 18.6 L15.1 14.1Z" fill="url(#gpn)" stroke="#6a4a10" stroke-width=".8"/><path d="M15.1 14.1 L22.7 18.6 L15.7 23.7Z" fill="#fff6dc" stroke="#555" stroke-width=".8"/><path d="M15.7 23.7 L15.5 20.6 L17.9 22.1Z" fill="#111"/></svg><svg style="left:1.5px;top:435px" width="30" height="30" viewBox="0 0 30 30"><path d="M5.5 4.5 H17.6 Q10.5 8.5 11.2 13.4 Q12.5 19 12.6 24 M8 24.4 H13.6" fill="none" stroke="#222" stroke-width="1.1"/><path d="M20.2 3.2 L27.2 9.6 L24 15 L18 11Z" fill="#7aa4c4" stroke="#234" stroke-width="1"/><path d="M21.6 4.6 L23.4 6.2 L20.6 10.6 L19.2 9.6Z" fill="#c4dcec"/><path d="M18 11 L24 15 L22.6 17.4 L17 14.4Z" fill="#f0b828" stroke="#654" stroke-width=".8"/><path d="M17 14.4 L22.6 17.4 L15.7 23.6Z" fill="#e8e8e8" stroke="#444" stroke-width=".8"/><path d="M15.7 23.6 L19.2 17.4" stroke="#555" stroke-width=".7"/><rect x="3.8" y="22" width="4.6" height="4.6" fill="#fff" stroke="#111" stroke-width="1.2"/><circle cx="15.1" cy="24.9" r="1.6" fill="#fff" stroke="#111" stroke-width="1"/></svg><svg style="left:1.5px;top:465px" width="30" height="30" viewBox="0 0 30 30"><path d="M4 3.6 Q9 3.2 12.5 6 Q14.5 10 13.2 15 Q12 20 14 23.2 Q19 25 26 22.6 Q19 26.8 12.5 25.6 Q8 23 8.2 15 Q9 7 4 3.6Z" fill="#000"/><path d="M19.5 4.4 L27.2 7.6 L25.5 11.5 L18.4 8.5Z" fill="#6a94b8" stroke="#234" stroke-width=".9"/><path d="M18.2 8.7 L25.4 11.8 L24.8 13.5 L17.6 10.4Z" fill="#e01818"/><path d="M17.6 10.5 L24.8 13.6 L22 20 L14.4 23.2 L15 15Z" fill="#f6c83c" stroke="#332" stroke-width="1"/><path d="M14.4 23.2 L19 16.6" stroke="#332" stroke-width="1"/><circle cx="19.2" cy="16.2" r="1.2" fill="#222"/></svg><div class="t" style="left:5.8px;top:497px;font-size:26px;font-weight:bold;color:#0c0c0c;text-shadow:.5px 0 0 #0c0c0c,-.3px 0 0 #0c0c0c">A</div><svg style="left:1.5px;top:495px" width="30" height="30" viewBox="0 0 30 30"><path d="M24.6 4 V26.6 M21.8 3.9 H23.8 M25.4 3.9 H27.4 M21.8 26.7 H23.8 M25.4 26.7 H27.4" stroke="#222" stroke-width="1.1" fill="none"/></svg><svg style="left:1.5px;top:525px" width="30" height="30" viewBox="0 0 30 30"><g fill="#222"><rect x="6" y="5.6" width="1.8" height="1.8"/><rect x="9" y="7.4" width="1.8" height="1.8"/><rect x="6" y="9.6" width="2.2" height="2.2"/><rect x="9.6" y="10.8" width="1.6" height="1.6"/><rect x="7.4" y="13.6" width="2" height="2"/><rect x="11.4" y="8.4" width="1.2" height="1.2" fill="#777"/><rect x="12.6" y="11" width="1.2" height="1.2" fill="#777"/><rect x="11" y="13.4" width="1.2" height="1.2" fill="#777"/></g><path d="M17.4 11.4 Q17.6 8.6 20.6 8.4 Q23.4 8.6 23.8 11.4Z" fill="#b8b8b8" stroke="#444" stroke-width=".8"/><path d="M16.4 12.4 L23.8 11.4 L24.2 13.2 L16.6 14.4Z" fill="#f0c028" stroke="#664" stroke-width=".6"/><path d="M15.2 14.6 L24.4 13.2 Q27.6 19 27.2 24.2 L19.4 25.2 Q15.4 20 15.2 14.6Z" fill="#3cae2c" stroke="#1a5a14" stroke-width="1"/><path d="M20.6 14.6 Q23.6 19 23.4 24" fill="none" stroke="#b4f0a4" stroke-width="1.6"/></svg><svg style="left:1.5px;top:555px" width="30" height="30" viewBox="0 0 30 30"><defs><linearGradient id="ger" x1="0" y1="0" x2="0.3" y2="1"><stop offset="0" stop-color="#fde4d8"/><stop offset="1" stop-color="#f2b09c"/></linearGradient></defs><path d="M15.1 3.7 L24.6 9.4 L15.1 25.4 L5.5 20.3Z" fill="url(#ger)" stroke="#1a1a1a" stroke-width="1.4" stroke-linejoin="round"/></svg><svg style="left:1.5px;top:585px" width="30" height="30" viewBox="0 0 30 30"><defs><linearGradient id="gbk" x1="0" y1="0" x2="1" y2="1"><stop offset="0" stop-color="#b8dcec"/><stop offset="1" stop-color="#3a6a98"/></linearGradient></defs><ellipse cx="14.1" cy="23.7" rx="10" ry="2.7" fill="#7cc890" stroke="#2a6a3a" stroke-width="1"/><path d="M8.4 10 Q6.2 14 8.4 20 Q9.4 23.4 12.4 22.6 L12.2 14Z" fill="#8cd49c" stroke="#2a6a3a" stroke-width=".9"/><path d="M7.9 8.9 L20.3 3.5 L26.6 13.6 L14.9 19.8Z" fill="url(#gbk)" stroke="#123" stroke-width="1.2" stroke-linejoin="round"/><ellipse cx="10.6" cy="9" rx="3.4" ry="2.2" transform="rotate(-24 10.6 9)" fill="#a8e0b8" stroke="#123" stroke-width=".9"/><path d="M10.2 5 Q12.4 8 14.1 12.8" fill="none" stroke="#333" stroke-width="1"/><circle cx="14.1" cy="12.8" r="1.3" fill="#ddd" stroke="#333" stroke-width=".8"/></svg><svg style="left:1.5px;top:615px" width="30" height="30" viewBox="0 0 30 30"><defs><linearGradient id="ggr" x1="0" y1="0" x2="1" y2="1"><stop offset="0" stop-color="#f0faf0"/><stop offset=".5" stop-color="#9cd49c"/><stop offset="1" stop-color="#3a9a3a"/></linearGradient></defs><rect x="4.7" y="4.7" width="21.9" height="21" fill="url(#ggr)" stroke="#a8dca8" stroke-width=".8"/><path d="M9.1 9.8 L21.6 20.3" stroke="#222" stroke-width="1.3"/><rect x="6.9" y="7.6" width="4.4" height="4.4" fill="#f0f0f0" stroke="#222" stroke-width="1.1"/><rect x="19.4" y="18.1" width="4.4" height="4.4" fill="#f0f0f0" stroke="#222" stroke-width="1.1"/></svg><svg style="left:1.5px;top:645px" width="30" height="30" viewBox="0 0 30 30"><path d="M18.4 10.6 L20.8 13 L11 23 Q9 24.8 8.4 24 Q7.8 23 9.4 21Z" fill="#c4dcf0" stroke="#234" stroke-width="1.1"/><path d="M17 9.4 L22 14.4 L23.4 13 L22.2 11.6 Q27.4 8.4 26.2 5 Q23.6 2.4 20.2 8 L18.6 7Z" fill="#111"/><path d="M8.6 24.6 Q6.8 27.6 8.4 28.2 Q10.4 27.6 8.6 24.6Z" fill="#7ab4ec" stroke="#236" stroke-width=".6"/></svg><svg style="left:13px;top:687px" width="10" height="7" viewBox="0 0 10 7"><path d="M0.8 0.8 L3.6 3.4 L0.8 6 M5.2 0.8 L8 3.4 L5.2 6" fill="none" stroke="#6870b4" stroke-width="1.3"/></svg><div class="hsep" style="left:1256px;top:136.4px;width:19px"></div><div class="hsep" style="left:1256px;top:279px;width:19px"></div><div class="hsep" style="left:1256px;top:446.3px;width:19px"></div><div class="hsep" style="left:1256px;top:562.5px;width:19px"></div><div class="pressed" style="left:1252.3px;top:106px;width:25.4px;height:23.5px"></div><div class="pressed" style="left:1252.3px;top:286.2px;width:25.4px;height:23.5px"></div><div class="pressed" style="left:1252.3px;top:454.3px;width:25.4px;height:23.5px"></div><div class="pressed" style="left:1252.3px;top:596.6px;width:25.4px;height:23.5px"></div><div class="pressed" style="left:1252.3px;top:621.7px;width:25.4px;height:23.5px"></div><svg style="left:1254.5px;top:106.8px" width="22" height="22" viewBox="0 0 22 22"><path d="M6 3.4 l2.6 2.6 l-2.6 2.6 l-2.6 -2.6Z" fill="#c4c4ff" stroke="#1818ff" stroke-width="1.4"/><path d="M8 8 L13 13" stroke="#000" stroke-width="1.7"/><path d="M14.6 14.6 L10 13.2 L13.2 10Z" fill="#000"/><path d="M16 13.4 l2.6 2.6 l-2.6 2.6 l-2.6 -2.6Z" fill="#c8d8c8" stroke="#2a8a2a" stroke-width="1.4"/></svg><svg style="left:1254.5px;top:145.3px" width="22" height="22" viewBox="0 0 22 22"><path d="M6 3.4 l2.6 2.6 l-2.6 2.6 l-2.6 -2.6Z" fill="#c4c4ff" stroke="#1818ff" stroke-width="1.4"/><path d="M8 8 L13 13" stroke="#000" stroke-width="1.7"/><path d="M14.6 14.6 L10 13.2 L13.2 10Z" fill="#000"/><path d="M16 13.4 l2.6 2.6 l-2.6 2.6 l-2.6 -2.6Z" fill="#c8d8c8" stroke="#2a8a2a" stroke-width="1.4"/></svg><svg style="left:1254.5px;top:287px" width="22" height="22" viewBox="0 0 22 22"><path d="M6 3.4 l2.6 2.6 l-2.6 2.6 l-2.6 -2.6Z" fill="#c4c4ff" stroke="#1818ff" stroke-width="1.4"/><path d="M8 8 L13 13" stroke="#000" stroke-width="1.7"/><path d="M14.6 14.6 L10 13.2 L13.2 10Z" fill="#000"/><path d="M16 13.4 l2.6 2.6 l-2.6 2.6 l-2.6 -2.6Z" fill="#c8d8c8" stroke="#2a8a2a" stroke-width="1.4"/></svg><svg style="left:1254.5px;top:455px" width="22" height="22" viewBox="0 0 22 22"><path d="M6 3.4 l2.6 2.6 l-2.6 2.6 l-2.6 -2.6Z" fill="#c4c4ff" stroke="#1818ff" stroke-width="1.4"/><path d="M8 8 L13 13" stroke="#000" stroke-width="1.7"/><path d="M14.6 14.6 L10 13.2 L13.2 10Z" fill="#000"/><path d="M16 13.4 l2.6 2.6 l-2.6 2.6 l-2.6 -2.6Z" fill="#c8d8c8" stroke="#2a8a2a" stroke-width="1.4"/></svg><svg style="left:1254.5px;top:170px" width="22" height="22" viewBox="0 0 22 22"><path d="M4 17.5 H18 V4" fill="none" stroke="#8a9a8a" stroke-width="1.2" stroke-dasharray="1.5 1.5"/></svg><svg style="left:1254.5px;top:196px" width="22" height="22" viewBox="0 0 22 22"><path d="M4 16.5 H16.5 V4" fill="none" stroke="#777" stroke-width="1.2" stroke-dasharray="1.5 1.5"/><path d="M16.5 14.1 l2.4 2.4 l-2.4 2.4 l-2.4 -2.4Z" fill="#b0d0b0" stroke="#4a7a4a" stroke-width="1.4"/></svg><svg style="left:1254.5px;top:222px" width="22" height="22" viewBox="0 0 22 22"><path d="M3 17.5 H17.5 V5" fill="none" stroke="#333" stroke-width="1.2" stroke-dasharray="1.5 1.5"/><path d="M17.5 6.8 l2.2 2.2 l-2.2 2.2 l-2.2 -2.2Z" fill="#b0d0b0" stroke="#4a7a4a" stroke-width="1.4"/></svg><svg style="left:1254.5px;top:248px" width="22" height="22" viewBox="0 0 22 22"><path d="M3 17.5 H17.5 V4" fill="none" stroke="#222" stroke-width="1.2" stroke-dasharray="1.5 1.5"/><path d="M6.5 6 l2 2 l-2 2 l-2 -2Z" fill="#c8f0c8" stroke="#4a7a4a" stroke-width="1.4"/></svg><svg style="left:1254.5px;top:313px" width="22" height="22" viewBox="0 0 22 22"><path d="M4 5 Q14 7 17.5 16.5 Q11 17 9 12" fill="none" stroke="#108020" stroke-width="1.8"/></svg><svg style="left:1254.5px;top:339px" width="22" height="22" viewBox="0 0 22 22"><path d="M3 18 L19 5" stroke="#555" stroke-width="1.1"/><path d="M5 7 Q11 10 17 17" fill="none" stroke="#555" stroke-width="1.1"/><path d="M10.5 9.3 l2.2 2.2 l-2.2 2.2 l-2.2 -2.2Z" fill="#c8f0c8" stroke="#108020" stroke-width="1.4"/></svg><svg style="left:1254.5px;top:365px" width="22" height="22" viewBox="0 0 22 22"><path d="M4 4 Q10 5 11 13 Q13 17 18 16" fill="none" stroke="#555" stroke-width="1.2"/><path d="M11 11.6 l2.4 2.4 l-2.4 2.4 l-2.4 -2.4Z" fill="#c8f0c8" stroke="#108020" stroke-width="1.4"/></svg><svg style="left:1254.5px;top:391px" width="22" height="22" viewBox="0 0 22 22"><path d="M3 6 L10 6 Q14 8 14 13 Q15 17 19 16" fill="none" stroke="#555" stroke-width="1.2"/><rect x="8" y="4" width="4" height="4" fill="#c8f0c8" stroke="#108020" stroke-width="1.1"/></svg><svg style="left:1254.5px;top:417px" width="22" height="22" viewBox="0 0 22 22"><path d="M3 17 L19 5" stroke="#c02020" stroke-width="1.2"/><path d="M6 12 L8 17 M14 5 L16 10" stroke="#c02020" stroke-width="1.6"/><path d="M11 9 l2 2 l-2 2 l-2 -2Z" fill="#c8f0c8" stroke="#108020" stroke-width="1.4"/></svg><svg style="left:1254.5px;top:481px" width="22" height="22" viewBox="0 0 22 22"><path d="M4 17.5 H17.5 V6" fill="none" stroke="#999" stroke-width="1.1"/><circle cx="9.5" cy="11.5" r="1.7" fill="#c8f0c8" stroke="#108020" stroke-width="1.1"/></svg><svg style="left:1254.5px;top:507px" width="22" height="22" viewBox="0 0 22 22"><path d="M4 17.5 H17 M17.5 4 V17" fill="none" stroke="#222" stroke-width="1.3" stroke-dasharray="1.5 1.5"/><path d="M4 10.5 h7 M7.5 7 v7" stroke="#000" stroke-width="1.4"/></svg><div class="t" style="left:1260.2px;top:534.1px;font-size:17.5px;font-weight:bold;color:#111;text-shadow:.4px 0 0 #111">A</div><svg style="left:1254.5px;top:533px" width="22" height="22" viewBox="0 0 22 22"><path d="M5 15.7 L18 15.2" stroke="#3a9a4a" stroke-width="1.6"/><path d="M5.2 13.3 l2.6 2.6 l-2.6 2.6 l-2.6 -2.6Z" fill="#8a9adc" stroke="#1a8a1a" stroke-width="1.4"/></svg><svg style="left:1254.5px;top:570px" width="22" height="22" viewBox="0 0 22 22"><defs><linearGradient id="gpg" x1="0" y1="0" x2="1" y2="1"><stop offset="0" stop-color="#fff"/><stop offset="1" stop-color="#bbb"/></linearGradient></defs><rect x="5.2" y="4.6" width="10" height="13.6" fill="url(#gpg)" stroke="#111" stroke-width="1.3"/></svg><svg style="left:1254.5px;top:597px" width="22" height="22" viewBox="0 0 22 22"><path d="M2.5 5.2 H18.3 M2.5 9.3 H18.3 M2.5 13.5 H18.3 M2.5 17.5 H18.3 M3.9 3 V19 M7.9 3 V19 M12 3 V19 M16 3 V19" stroke="#1010ff" stroke-width="1.25"/></svg><svg style="left:1254.5px;top:623px" width="22" height="22" viewBox="0 0 22 22"><path d="M2.8 2.9 V18.7 M13.4 3.5 L7.7 18.7 M15.2 2.9 V18.7" stroke="#1010ff" stroke-width="1.3"/></svg></body></html>
